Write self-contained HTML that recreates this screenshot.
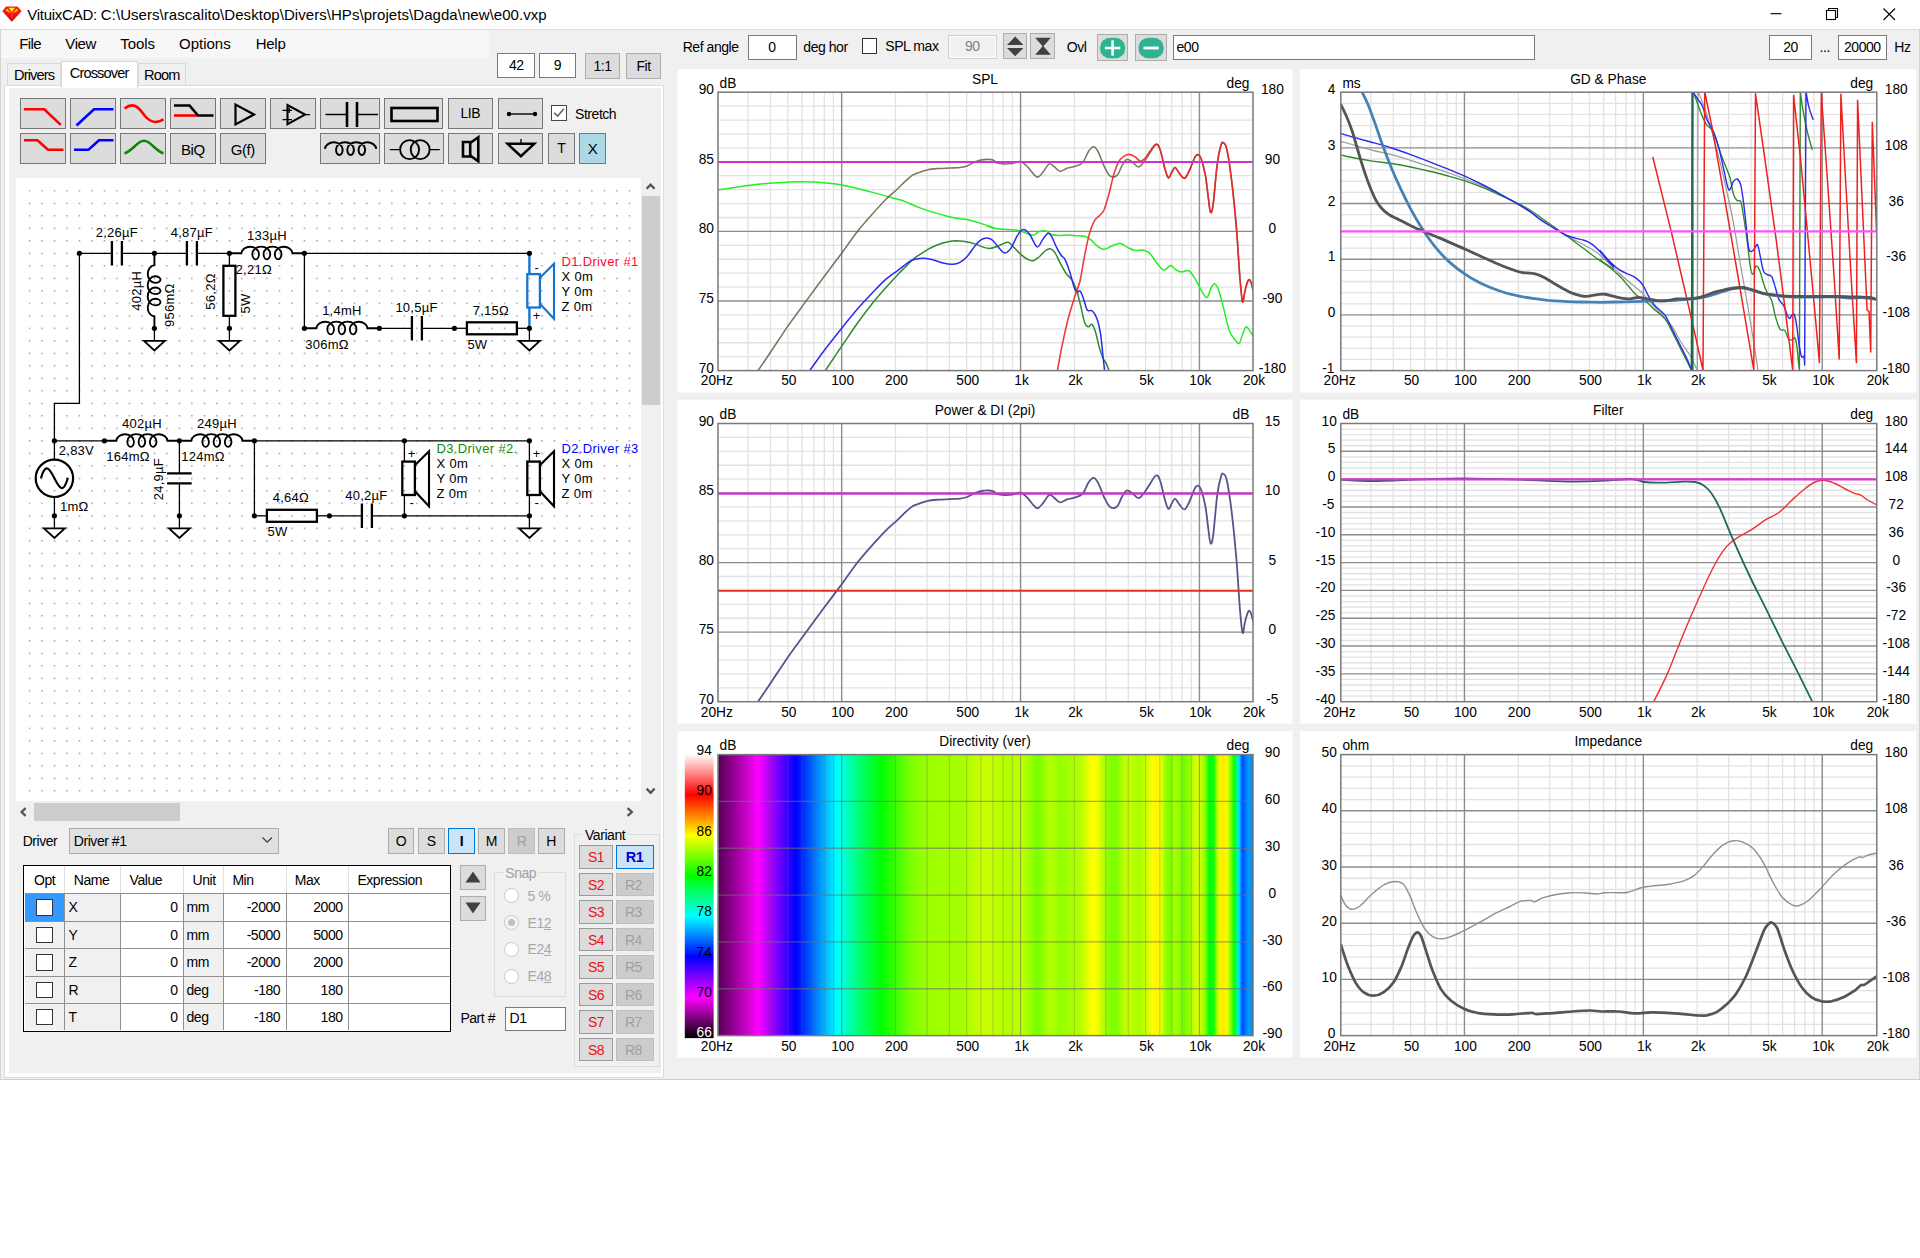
<!DOCTYPE html>
<html lang="en"><head><meta charset="utf-8"><title>VituixCAD</title><style>
html,body{margin:0;padding:0;background:#fff;}
body{width:1920px;height:1258px;position:relative;overflow:hidden;font-family:"Liberation Sans",Arial,sans-serif;}
.a{position:absolute;box-sizing:border-box;}
.t{white-space:nowrap;letter-spacing:-0.45px;}
.ic{display:block;position:absolute;left:0;top:0;}
u{text-decoration:underline;}
</style></head><body>
<div class="a" style="left:0.0px;top:0.0px;width:1920.0px;height:29.5px;background:#fff;"></div>
<svg class="a" style="left:2px;top:5.6px" width="20" height="16.4" viewBox="0 0 20 16.4"><defs><linearGradient id="gem" x1="0" y1="0" x2="0" y2="1"><stop offset="0" stop-color="#ff1818"/><stop offset="0.55" stop-color="#f01010"/><stop offset="1" stop-color="#c00808"/></linearGradient></defs><path d="M4 0.6H15.6L19.6 5.2L9.8 15.8L0.4 5.2Z" fill="url(#gem)"/><path d="M6.6 1.8H13L9.8 6.2Z" fill="#f4f000"/><path d="M3.4 4.6L5.4 2.6L8.6 7.4ZM16.4 4.6L14.4 2.6L11 7.4Z" fill="#e8c800"/><path d="M9.8 6.4V12" stroke="#ff5030" stroke-width="1"/></svg>
<div class="a t" style="top:6.1px;font-size:15px;line-height:18px;color:#000;left:27.2px;letter-spacing:0px;"><span style="letter-spacing:-0.25px">VituixCAD: </span><span style="letter-spacing:0.05px">C:\Users\rascalito\Desktop\Divers\HPs\projets\Dagda\new\e00.vxp</span></div>
<svg class="a" style="left:1760px;top:0" width="160" height="29" viewBox="0 0 160 29" fill="none" stroke="#000" stroke-width="1.1"><path d="M10.5 13.7H21.5"/><rect x="66.5" y="10.5" width="9" height="9"/><path d="M68.5 10.5V8.5H77.5V17.5H75.5"/><path d="M123.5 8.5L135 20M135 8.5L123.5 20"/></svg>
<div class="a" style="left:0.0px;top:29.3px;width:1920.0px;height:1050.5px;background:#f0f0f0;"></div>
<div class="a" style="left:0.0px;top:29.0px;width:1920.0px;height:1.0px;background:#dcdcdc;"></div>
<div class="a" style="left:0.0px;top:29.3px;width:1.0px;height:1050.5px;background:#d4d4d4;"></div>
<div class="a" style="left:1919.0px;top:29.3px;width:1.0px;height:1050.5px;background:#d4d4d4;"></div>
<div class="a" style="left:0.0px;top:1078.8px;width:1920.0px;height:1.1px;background:#cfcfcf;"></div>
<div class="a" style="left:1.0px;top:30.0px;width:488.0px;height:28.4px;background:#f7f7f7;"></div>
<div class="a t" style="top:34.7px;font-size:15px;line-height:18px;color:#000;left:19.2px;letter-spacing:-0.6px;">File</div>
<div class="a t" style="top:34.7px;font-size:15px;line-height:18px;color:#000;left:65.3px;letter-spacing:-0.4px;">View</div>
<div class="a t" style="top:34.7px;font-size:15px;line-height:18px;color:#000;left:120.3px;letter-spacing:-0.05px;">Tools</div>
<div class="a t" style="top:34.7px;font-size:15px;line-height:18px;color:#000;left:179.0px;letter-spacing:0px;">Options</div>
<div class="a t" style="top:34.7px;font-size:15px;line-height:18px;color:#000;left:255.8px;letter-spacing:-0.3px;">Help</div>
<div class="a" style="left:6.5px;top:63.3px;width:54.5px;height:23.5px;background:#f0f0f0;border:1px solid #d9d9d9;"></div>
<div class="a" style="left:138.0px;top:63.3px;width:47.5px;height:23.5px;background:#f0f0f0;border:1px solid #d9d9d9;"></div>
<div class="a" style="left:4.2px;top:85.3px;width:659.8px;height:992.3px;background:#fff;border:1px solid #dcdcdc;"></div>
<div class="a" style="left:8.9px;top:88.2px;width:652.4px;height:985.2px;background:#f0f0f0;"></div>
<div class="a" style="left:60.5px;top:60.7px;width:77.5px;height:27.8px;background:#fff;border:1px solid #d9d9d9;border-bottom:none;"></div>
<div class="a t" style="top:66.1px;font-size:14.6px;line-height:18px;color:#000;left:14.0px;letter-spacing:-0.85px;">Drivers</div>
<div class="a t" style="top:63.8px;font-size:14.6px;line-height:18px;color:#000;left:69.7px;letter-spacing:-0.85px;">Crossover</div>
<div class="a t" style="top:66.1px;font-size:14.6px;line-height:18px;color:#000;left:144.0px;letter-spacing:-0.85px;">Room</div>
<div class="a" style="left:497.3px;top:53.3px;width:37.6px;height:24.3px;background:#fff;border:1px solid #7a7a7a;"></div>
<div class="a t" style="top:57.4px;font-size:14px;line-height:17px;color:#000;left:416.3px;width:200px;text-align:center;">42</div>
<div class="a" style="left:538.7px;top:53.3px;width:37.4px;height:24.3px;background:#fff;border:1px solid #7a7a7a;"></div>
<div class="a t" style="top:57.4px;font-size:14px;line-height:17px;color:#000;left:457.5px;width:200px;text-align:center;">9</div>
<div class="a" style="left:584.8px;top:53.2px;width:35.2px;height:25.6px;background:#dcdcdc;border:1px solid #adadad;"></div>
<div class="a t" style="top:58.2px;font-size:14px;line-height:17px;color:#000;left:502.5px;width:200px;text-align:center;">1:1</div>
<div class="a" style="left:626.1px;top:53.2px;width:34.9px;height:25.6px;background:#dcdcdc;border:1px solid #adadad;"></div>
<div class="a t" style="top:58.2px;font-size:14px;line-height:17px;color:#000;left:543.5px;width:200px;text-align:center;">Fit</div>
<div class="a" style="left:20.2px;top:97.8px;width:45.6px;height:30.8px;background:#dcdcdc;border:1px solid #777777;"><svg class="ic" width="43.6" height="28.8" viewBox="0 0 43.6 28.8" fill="none" stroke-linecap="butt"><path d="M2.8 10.2H23.2L39.8 25.9" stroke="#ff0000" stroke-width="2.6" stroke-linejoin="miter"/></svg></div>
<div class="a" style="left:70.2px;top:97.8px;width:45.6px;height:30.8px;background:#dcdcdc;border:1px solid #777777;"><svg class="ic" width="43.6" height="28.8" viewBox="0 0 43.6 28.8" fill="none" stroke-linecap="butt"><path d="M5.5 26.5L23 10.2H42.5" stroke="#0000ff" stroke-width="2.6"/></svg></div>
<div class="a" style="left:120.3px;top:97.8px;width:45.4px;height:30.8px;background:#dcdcdc;border:1px solid #777777;"><svg class="ic" width="43.4" height="28.8" viewBox="0 0 43.4 28.8" fill="none" stroke-linecap="butt"><path d="M3.5 9.5C12 3 17 7.5 22 14.5C27 21.5 33 26 42.5 20.5" stroke="#ff0000" stroke-width="2.6"/></svg></div>
<div class="a" style="left:170.3px;top:97.8px;width:45.3px;height:30.8px;background:#dcdcdc;border:1px solid #777777;"><svg class="ic" width="43.3" height="28.8" viewBox="0 0 43.3 28.8" fill="none" stroke-linecap="butt"><path d="M3 16.5H26" stroke="#ff0000" stroke-width="2.6"/><path d="M3 6.5H18.5L27 16.5H42.5" stroke="#000" stroke-width="2.6"/></svg></div>
<div class="a" style="left:220.3px;top:97.8px;width:45.4px;height:30.8px;background:#dcdcdc;border:1px solid #777777;"><svg class="ic" width="43.4" height="28.8" viewBox="0 0 43.4 28.8" fill="none" stroke-linecap="butt"><path d="M14.5 5.5V25.5L33 15.5Z" stroke="#000" stroke-width="2.2"/></svg></div>
<div class="a" style="left:270.3px;top:97.8px;width:45.4px;height:30.8px;background:#dcdcdc;border:1px solid #777777;"><svg class="ic" width="43.4" height="28.8" viewBox="0 0 43.4 28.8" fill="none" stroke-linecap="butt"><path d="M16.5 6V25.2L34 15.6Z" stroke="#000" stroke-width="2.1" stroke-linejoin="miter"/><path d="M11.5 11.3H21M18.2 8.6V14M11.5 20.6H21M34 15.6H39" stroke="#000" stroke-width="1.3"/></svg></div>
<div class="a" style="left:320.3px;top:97.8px;width:59.5px;height:30.8px;background:#dcdcdc;border:1px solid #777777;"><svg class="ic" width="57.5" height="28.8" viewBox="0 0 57.5 28.8" fill="none" stroke-linecap="butt"><path d="M4.5 15.5H26M36 15.5H57" stroke="#000" stroke-width="1.4"/><path d="M26 3V28M36 3V28" stroke="#000" stroke-width="2.6"/></svg></div>
<div class="a" style="left:384.3px;top:97.8px;width:58.9px;height:30.8px;background:#dcdcdc;border:1px solid #777777;"><svg class="ic" width="56.9" height="28.8" viewBox="0 0 56.9 28.8" fill="none" stroke-linecap="butt"><rect x="6.5" y="9" width="46" height="13" stroke="#000" stroke-width="2.6"/></svg></div>
<div class="a" style="left:448.2px;top:97.8px;width:45.1px;height:30.8px;background:#dcdcdc;border:1px solid #777777;"></div>
<div class="a t" style="top:105.0px;font-size:14px;line-height:17px;color:#000;left:370.3px;width:200px;text-align:center;">LIB</div>
<div class="a" style="left:498.2px;top:97.8px;width:45.2px;height:30.8px;background:#dcdcdc;border:1px solid #777777;"><svg class="ic" width="43.2" height="28.8" viewBox="0 0 43.2 28.8" fill="none" stroke-linecap="butt"><path d="M10 15H36" stroke="#000" stroke-width="1.4"/><circle cx="10" cy="15" r="2.2" fill="#000"/><circle cx="36" cy="15" r="2.2" fill="#000"/></svg></div>
<div class="a" style="left:551.3px;top:105.1px;width:16.0px;height:16.0px;background:#fff;border:1px solid #444;"><svg class="ic" width="14" height="14" viewBox="0 0 14 14" fill="none"><path d="M2.2 6.8L5.6 10.2L11.8 2.8" stroke="#555" stroke-width="1.4"/></svg></div>
<div class="a t" style="top:106.2px;font-size:14px;line-height:17px;color:#000;left:575.0px;">Stretch</div>
<div class="a" style="left:20.2px;top:132.8px;width:45.6px;height:30.8px;background:#dcdcdc;border:1px solid #777777;"><svg class="ic" width="43.6" height="28.8" viewBox="0 0 43.6 28.8" fill="none" stroke-linecap="butt"><path transform="translate(0 -1.2)" d="M3 7.5H16.5L27 17H42.5" stroke="#ff0000" stroke-width="2.6"/></svg></div>
<div class="a" style="left:70.2px;top:132.8px;width:45.6px;height:30.8px;background:#dcdcdc;border:1px solid #777777;"><svg class="ic" width="43.6" height="28.8" viewBox="0 0 43.6 28.8" fill="none" stroke-linecap="butt"><path transform="translate(0 -1.2)" d="M3 17H17.5L28 7.5H42.5" stroke="#0000ff" stroke-width="2.6"/></svg></div>
<div class="a" style="left:120.3px;top:132.8px;width:45.4px;height:30.8px;background:#dcdcdc;border:1px solid #777777;"><svg class="ic" width="43.4" height="28.8" viewBox="0 0 43.4 28.8" fill="none" stroke-linecap="butt"><path transform="translate(0 -1.2)" d="M3.5 20.5C12 18 16 8 23 8C30 8 34 18 42.5 20.5" stroke="#0a860a" stroke-width="2.6"/></svg></div>
<div class="a" style="left:170.3px;top:132.8px;width:45.3px;height:30.8px;background:#dcdcdc;border:1px solid #777777;"></div>
<div class="a t" style="top:141.2px;font-size:15px;line-height:18px;color:#000;left:92.8px;width:200px;text-align:center;">BiQ</div>
<div class="a" style="left:220.3px;top:132.8px;width:45.4px;height:30.8px;background:#dcdcdc;border:1px solid #777777;"></div>
<div class="a t" style="top:141.2px;font-size:15px;line-height:18px;color:#000;left:142.8px;width:200px;text-align:center;">G(f)</div>
<div class="a" style="left:320.3px;top:132.8px;width:59.5px;height:30.8px;background:#dcdcdc;border:1px solid #777777;"><svg class="ic" width="57.5" height="28.8" viewBox="0 0 57.5 28.8" fill="none" stroke-linecap="butt"><path transform="translate(-7.9 14.9)" d="M11.8 0A8.9 7.4 0 0 1 29.55 0.7A3.3 5.4 0 0 1 22.95 0.7A8.9 7.4 0 0 1 40.80 0.7A3.3 5.4 0 0 1 34.20 0.7A8.9 7.4 0 0 1 52.05 0.7A3.3 5.4 0 0 1 45.45 0.7A8.9 7.4 0 0 1 63.2 0" stroke="#000" stroke-width="2"/></svg></div>
<div class="a" style="left:384.3px;top:132.8px;width:59.7px;height:30.8px;background:#dcdcdc;border:1px solid #777777;"><svg class="ic" width="57.7" height="28.8" viewBox="0 0 57.7 28.8" fill="none" stroke-linecap="butt"><circle cx="24.6" cy="15.6" r="9.5" stroke="#000" stroke-width="1.9"/><circle cx="35.2" cy="15.6" r="9.5" stroke="#000" stroke-width="1.9"/><path d="M4.8 15.6H15M44.8 15.6H54.8" stroke="#000" stroke-width="1.4"/></svg></div>
<div class="a" style="left:448.2px;top:132.8px;width:45.1px;height:30.8px;background:#dcdcdc;border:1px solid #777777;"><svg class="ic" width="43.1" height="28.8" viewBox="0 0 43.1 28.8" fill="none" stroke-linecap="butt"><path d="M14 8H21.2V22.5H14Z" stroke="#000" stroke-width="2.6"/><path d="M21.2 9L29.3 3.2V27.3L21.2 21.5" stroke="#000" stroke-width="2.6" stroke-linejoin="miter"/></svg></div>
<div class="a" style="left:498.2px;top:132.8px;width:45.2px;height:30.8px;background:#dcdcdc;border:1px solid #777777;"><svg class="ic" width="43.2" height="28.8" viewBox="0 0 43.2 28.8" fill="none" stroke-linecap="butt"><path d="M22 5V10" stroke="#000" stroke-width="1.4"/><path d="M8.6 9.8H35.2L21.9 22.2Z" stroke="#000" stroke-width="2.5" stroke-linejoin="miter"/></svg></div>
<div class="a" style="left:548.0px;top:132.8px;width:26.6px;height:30.8px;background:#dcdcdc;border:1px solid #777777;"></div>
<div class="a t" style="top:140.4px;font-size:14px;line-height:17px;color:#000;left:461.3px;width:200px;text-align:center;">T</div>
<div class="a" style="left:579.4px;top:132.8px;width:26.4px;height:30.8px;background:#add8e6;border:1px solid #777777;"></div>
<div class="a t" style="top:140.2px;font-size:15px;line-height:18px;color:#000;left:492.6px;width:200px;text-align:center;">X</div>
<div class="a" style="left:16.0px;top:178.0px;width:624.5px;height:622.5px;background:#fff;"></div>
<div class="a" style="left:641.0px;top:178.0px;width:19.0px;height:622.5px;background:#f0f0f0;"></div>
<div class="a" style="left:641.5px;top:195.5px;width:18.0px;height:209.0px;background:#cdcdcd;"></div>
<svg class="a" style="left:641px;top:178px" width="19" height="623" viewBox="0 0 19 623" fill="none" stroke="#555" stroke-width="2.3"><path d="M5.6 10.8L9.6 6.6L13.6 10.8"/><path d="M5.6 610.6L9.6 614.8L13.6 610.6"/></svg>
<div class="a" style="left:16.0px;top:802.0px;width:624.5px;height:19.5px;background:#f0f0f0;"></div>
<div class="a" style="left:33.8px;top:802.5px;width:146.0px;height:18.5px;background:#cdcdcd;"></div>
<svg class="a" style="left:16px;top:802px" width="625" height="20" viewBox="0 0 625 20" fill="none" stroke="#555" stroke-width="2.3"><path d="M9.6 6.2L5.6 10L9.6 13.8"/><path d="M611.6 6.2L615.8 10L611.6 13.8"/></svg>
<div class="a t" style="top:833.2px;font-size:14px;line-height:17px;color:#000;left:22.7px;">Driver</div>
<div class="a" style="left:69.0px;top:827.8px;width:209.5px;height:26.0px;background:#e1e1e1;border:1px solid #adadad;"></div>
<div class="a t" style="top:833.2px;font-size:14px;line-height:17px;color:#000;left:73.8px;">Driver #1</div>
<svg class="a" style="left:260px;top:834px" width="14" height="12" viewBox="0 0 14 12" fill="none" stroke="#404040" stroke-width="1.3"><path d="M2.5 3.5L7.2 8.2L12 3.5"/></svg>
<div class="a" style="left:387.8px;top:827.8px;width:26.6px;height:26.0px;background:#dcdcdc;border:1px solid #adadad;"></div>
<div class="a t" style="top:832.8px;font-size:14px;line-height:17px;color:#000;left:301.1px;width:200px;text-align:center;">O</div>
<div class="a" style="left:418.0px;top:827.8px;width:26.6px;height:26.0px;background:#dcdcdc;border:1px solid #adadad;"></div>
<div class="a t" style="top:832.8px;font-size:14px;line-height:17px;color:#000;left:331.3px;width:200px;text-align:center;">S</div>
<div class="a" style="left:448.0px;top:827.8px;width:26.8px;height:26.0px;background:#cce4f7;border:1.5px solid #0078d7;"></div>
<div class="a t" style="top:832.8px;font-size:14px;line-height:17px;color:#000;left:361.4px;width:200px;text-align:center;font-weight:bold;">I</div>
<div class="a" style="left:478.0px;top:827.8px;width:26.8px;height:26.0px;background:#dcdcdc;border:1px solid #adadad;"></div>
<div class="a t" style="top:832.8px;font-size:14px;line-height:17px;color:#000;left:391.4px;width:200px;text-align:center;">M</div>
<div class="a" style="left:508.2px;top:827.8px;width:26.6px;height:26.0px;background:#cccccc;border:1px solid #bfbfbf;"></div>
<div class="a t" style="top:832.8px;font-size:14px;line-height:17px;color:#a0a0a0;left:421.5px;width:200px;text-align:center;">R</div>
<div class="a" style="left:537.8px;top:827.8px;width:26.8px;height:26.0px;background:#dcdcdc;border:1px solid #adadad;"></div>
<div class="a t" style="top:832.8px;font-size:14px;line-height:17px;color:#000;left:451.2px;width:200px;text-align:center;">H</div>
<div class="a" style="left:574.2px;top:833.6px;width:85.5px;height:233.4px;border:1px solid #dcdcdc;"></div>
<div class="a" style="left:582.0px;top:826.0px;width:46.0px;height:16.0px;background:#f0f0f0;"></div>
<div class="a t" style="top:827.4px;font-size:14px;line-height:17px;color:#000;left:585.0px;">Variant</div>
<div class="a" style="left:579.2px;top:845.0px;width:34.2px;height:23.7px;background:#dcdcdc;border:1px solid #9a9a9a;"></div>
<div class="a t" style="top:849.2px;font-size:14px;line-height:17px;color:#f01010;left:496.0px;width:200px;text-align:center;">S1</div>
<div class="a" style="left:616.4px;top:845.0px;width:37.3px;height:23.7px;background:#cce4f7;border:1.5px solid #0078d7;"></div>
<div class="a t" style="top:849.1px;font-size:14.5px;line-height:17px;color:#0000e0;left:534.6px;width:200px;text-align:center;font-weight:bold;">R1</div>
<div class="a" style="left:579.2px;top:872.5px;width:34.2px;height:23.7px;background:#dcdcdc;border:1px solid #9a9a9a;"></div>
<div class="a t" style="top:876.8px;font-size:14px;line-height:17px;color:#f01010;left:496.0px;width:200px;text-align:center;">S2</div>
<div class="a" style="left:616.4px;top:872.5px;width:37.3px;height:23.7px;background:#cccccc;border:1px solid #bfbfbf;"></div>
<div class="a t" style="top:876.8px;font-size:14px;line-height:17px;color:#a0a0a0;left:533.4px;width:200px;text-align:center;">R2</div>
<div class="a" style="left:579.2px;top:900.0px;width:34.2px;height:23.7px;background:#dcdcdc;border:1px solid #9a9a9a;"></div>
<div class="a t" style="top:904.3px;font-size:14px;line-height:17px;color:#f01010;left:496.0px;width:200px;text-align:center;">S3</div>
<div class="a" style="left:616.4px;top:900.0px;width:37.3px;height:23.7px;background:#cccccc;border:1px solid #bfbfbf;"></div>
<div class="a t" style="top:904.3px;font-size:14px;line-height:17px;color:#a0a0a0;left:533.4px;width:200px;text-align:center;">R3</div>
<div class="a" style="left:579.2px;top:927.6px;width:34.2px;height:23.7px;background:#dcdcdc;border:1px solid #9a9a9a;"></div>
<div class="a t" style="top:931.8px;font-size:14px;line-height:17px;color:#f01010;left:496.0px;width:200px;text-align:center;">S4</div>
<div class="a" style="left:616.4px;top:927.6px;width:37.3px;height:23.7px;background:#cccccc;border:1px solid #bfbfbf;"></div>
<div class="a t" style="top:931.8px;font-size:14px;line-height:17px;color:#a0a0a0;left:533.4px;width:200px;text-align:center;">R4</div>
<div class="a" style="left:579.2px;top:955.1px;width:34.2px;height:23.7px;background:#dcdcdc;border:1px solid #9a9a9a;"></div>
<div class="a t" style="top:959.3px;font-size:14px;line-height:17px;color:#f01010;left:496.0px;width:200px;text-align:center;">S5</div>
<div class="a" style="left:616.4px;top:955.1px;width:37.3px;height:23.7px;background:#cccccc;border:1px solid #bfbfbf;"></div>
<div class="a t" style="top:959.3px;font-size:14px;line-height:17px;color:#a0a0a0;left:533.4px;width:200px;text-align:center;">R5</div>
<div class="a" style="left:579.2px;top:982.6px;width:34.2px;height:23.7px;background:#dcdcdc;border:1px solid #9a9a9a;"></div>
<div class="a t" style="top:986.8px;font-size:14px;line-height:17px;color:#f01010;left:496.0px;width:200px;text-align:center;">S6</div>
<div class="a" style="left:616.4px;top:982.6px;width:37.3px;height:23.7px;background:#cccccc;border:1px solid #bfbfbf;"></div>
<div class="a t" style="top:986.8px;font-size:14px;line-height:17px;color:#a0a0a0;left:533.4px;width:200px;text-align:center;">R6</div>
<div class="a" style="left:579.2px;top:1010.1px;width:34.2px;height:23.7px;background:#dcdcdc;border:1px solid #9a9a9a;"></div>
<div class="a t" style="top:1014.4px;font-size:14px;line-height:17px;color:#f01010;left:496.0px;width:200px;text-align:center;">S7</div>
<div class="a" style="left:616.4px;top:1010.1px;width:37.3px;height:23.7px;background:#cccccc;border:1px solid #bfbfbf;"></div>
<div class="a t" style="top:1014.4px;font-size:14px;line-height:17px;color:#a0a0a0;left:533.4px;width:200px;text-align:center;">R7</div>
<div class="a" style="left:579.2px;top:1037.6px;width:34.2px;height:23.7px;background:#dcdcdc;border:1px solid #9a9a9a;"></div>
<div class="a t" style="top:1041.9px;font-size:14px;line-height:17px;color:#f01010;left:496.0px;width:200px;text-align:center;">S8</div>
<div class="a" style="left:616.4px;top:1037.6px;width:37.3px;height:23.7px;background:#cccccc;border:1px solid #bfbfbf;"></div>
<div class="a t" style="top:1041.9px;font-size:14px;line-height:17px;color:#a0a0a0;left:533.4px;width:200px;text-align:center;">R8</div>
<div class="a" style="left:23.0px;top:864.5px;width:428.0px;height:167.3px;background:#fff;border:1.7px solid #000;box-sizing:border-box;"></div>
<div class="a" style="left:24.5px;top:893.5px;width:40.0px;height:27.5px;background:#f0f0f0;"></div>
<div class="a" style="left:64.5px;top:893.5px;width:55.9px;height:27.5px;background:#f0f0f0;"></div>
<div class="a" style="left:183.2px;top:893.5px;width:40.0px;height:27.5px;background:#f0f0f0;"></div>
<div class="a" style="left:24.5px;top:921.0px;width:40.0px;height:27.5px;background:#f0f0f0;"></div>
<div class="a" style="left:64.5px;top:921.0px;width:55.9px;height:27.5px;background:#f0f0f0;"></div>
<div class="a" style="left:183.2px;top:921.0px;width:40.0px;height:27.5px;background:#f0f0f0;"></div>
<div class="a" style="left:24.5px;top:948.5px;width:40.0px;height:27.5px;background:#f0f0f0;"></div>
<div class="a" style="left:64.5px;top:948.5px;width:55.9px;height:27.5px;background:#f0f0f0;"></div>
<div class="a" style="left:183.2px;top:948.5px;width:40.0px;height:27.5px;background:#f0f0f0;"></div>
<div class="a" style="left:24.5px;top:976.0px;width:40.0px;height:27.5px;background:#f0f0f0;"></div>
<div class="a" style="left:64.5px;top:976.0px;width:55.9px;height:27.5px;background:#f0f0f0;"></div>
<div class="a" style="left:183.2px;top:976.0px;width:40.0px;height:27.5px;background:#f0f0f0;"></div>
<div class="a" style="left:24.5px;top:1003.5px;width:40.0px;height:26.7px;background:#f0f0f0;"></div>
<div class="a" style="left:64.5px;top:1003.5px;width:55.9px;height:26.7px;background:#f0f0f0;"></div>
<div class="a" style="left:183.2px;top:1003.5px;width:40.0px;height:26.7px;background:#f0f0f0;"></div>
<div class="a" style="left:24.5px;top:893.5px;width:40.0px;height:27.5px;background:#3399ff;"></div>
<div class="a" style="left:24.5px;top:893.0px;width:425.0px;height:1.0px;background:#909090;"></div>
<div class="a" style="left:24.5px;top:920.5px;width:425.0px;height:1.0px;background:#909090;"></div>
<div class="a" style="left:24.5px;top:948.0px;width:425.0px;height:1.0px;background:#909090;"></div>
<div class="a" style="left:24.5px;top:975.5px;width:425.0px;height:1.0px;background:#909090;"></div>
<div class="a" style="left:24.5px;top:1003.0px;width:425.0px;height:1.0px;background:#909090;"></div>
<div class="a" style="left:63.5px;top:865.8px;width:1.0px;height:27.7px;background:#e0e0e0;"></div>
<div class="a" style="left:63.5px;top:893.5px;width:1.0px;height:136.7px;background:#909090;"></div>
<div class="a" style="left:119.5px;top:865.8px;width:1.0px;height:27.7px;background:#e0e0e0;"></div>
<div class="a" style="left:119.5px;top:893.5px;width:1.0px;height:136.7px;background:#909090;"></div>
<div class="a" style="left:182.5px;top:865.8px;width:1.0px;height:27.7px;background:#e0e0e0;"></div>
<div class="a" style="left:182.5px;top:893.5px;width:1.0px;height:136.7px;background:#909090;"></div>
<div class="a" style="left:222.5px;top:865.8px;width:1.0px;height:27.7px;background:#e0e0e0;"></div>
<div class="a" style="left:222.5px;top:893.5px;width:1.0px;height:136.7px;background:#909090;"></div>
<div class="a" style="left:285.5px;top:865.8px;width:1.0px;height:27.7px;background:#e0e0e0;"></div>
<div class="a" style="left:285.5px;top:893.5px;width:1.0px;height:136.7px;background:#909090;"></div>
<div class="a" style="left:347.5px;top:865.8px;width:1.0px;height:27.7px;background:#e0e0e0;"></div>
<div class="a" style="left:347.5px;top:893.5px;width:1.0px;height:136.7px;background:#909090;"></div>
<div class="a t" style="top:872.4px;font-size:14px;line-height:17px;color:#000;left:34.0px;">Opt</div>
<div class="a t" style="top:872.4px;font-size:14px;line-height:17px;color:#000;left:73.8px;">Name</div>
<div class="a t" style="top:872.4px;font-size:14px;line-height:17px;color:#000;left:129.6px;">Value</div>
<div class="a t" style="top:872.4px;font-size:14px;line-height:17px;color:#000;left:192.5px;">Unit</div>
<div class="a t" style="top:872.4px;font-size:14px;line-height:17px;color:#000;left:232.4px;">Min</div>
<div class="a t" style="top:872.4px;font-size:14px;line-height:17px;color:#000;left:294.8px;">Max</div>
<div class="a t" style="top:872.4px;font-size:14px;line-height:17px;color:#000;left:357.4px;">Expression</div>
<div class="a" style="left:36.2px;top:899.2px;width:16.4px;height:16.4px;background:#fff;border:1.3px solid #333;box-sizing:border-box;"></div>
<div class="a t" style="top:899.1px;font-size:14px;line-height:17px;color:#000;left:68.4px;">X</div>
<div class="a t" style="top:899.1px;font-size:14px;line-height:17px;color:#000;right:1742.4px;text-align:right;">0</div>
<div class="a t" style="top:899.1px;font-size:14px;line-height:17px;color:#000;left:186.5px;">mm</div>
<div class="a t" style="top:899.1px;font-size:14px;line-height:17px;color:#000;right:1639.8px;text-align:right;">-2000</div>
<div class="a t" style="top:899.1px;font-size:14px;line-height:17px;color:#000;right:1577.4px;text-align:right;">2000</div>
<div class="a" style="left:36.2px;top:926.8px;width:16.4px;height:16.4px;background:#fff;border:1.3px solid #333;box-sizing:border-box;"></div>
<div class="a t" style="top:926.6px;font-size:14px;line-height:17px;color:#000;left:68.4px;">Y</div>
<div class="a t" style="top:926.6px;font-size:14px;line-height:17px;color:#000;right:1742.4px;text-align:right;">0</div>
<div class="a t" style="top:926.6px;font-size:14px;line-height:17px;color:#000;left:186.5px;">mm</div>
<div class="a t" style="top:926.6px;font-size:14px;line-height:17px;color:#000;right:1639.8px;text-align:right;">-5000</div>
<div class="a t" style="top:926.6px;font-size:14px;line-height:17px;color:#000;right:1577.4px;text-align:right;">5000</div>
<div class="a" style="left:36.2px;top:954.2px;width:16.4px;height:16.4px;background:#fff;border:1.3px solid #333;box-sizing:border-box;"></div>
<div class="a t" style="top:954.1px;font-size:14px;line-height:17px;color:#000;left:68.4px;">Z</div>
<div class="a t" style="top:954.1px;font-size:14px;line-height:17px;color:#000;right:1742.4px;text-align:right;">0</div>
<div class="a t" style="top:954.1px;font-size:14px;line-height:17px;color:#000;left:186.5px;">mm</div>
<div class="a t" style="top:954.1px;font-size:14px;line-height:17px;color:#000;right:1639.8px;text-align:right;">-2000</div>
<div class="a t" style="top:954.1px;font-size:14px;line-height:17px;color:#000;right:1577.4px;text-align:right;">2000</div>
<div class="a" style="left:36.2px;top:981.8px;width:16.4px;height:16.4px;background:#fff;border:1.3px solid #333;box-sizing:border-box;"></div>
<div class="a t" style="top:981.6px;font-size:14px;line-height:17px;color:#000;left:68.4px;">R</div>
<div class="a t" style="top:981.6px;font-size:14px;line-height:17px;color:#000;right:1742.4px;text-align:right;">0</div>
<div class="a t" style="top:981.6px;font-size:14px;line-height:17px;color:#000;left:186.5px;">deg</div>
<div class="a t" style="top:981.6px;font-size:14px;line-height:17px;color:#000;right:1639.8px;text-align:right;">-180</div>
<div class="a t" style="top:981.6px;font-size:14px;line-height:17px;color:#000;right:1577.4px;text-align:right;">180</div>
<div class="a" style="left:36.2px;top:1008.9px;width:16.4px;height:16.4px;background:#fff;border:1.3px solid #333;box-sizing:border-box;"></div>
<div class="a t" style="top:1009.1px;font-size:14px;line-height:17px;color:#000;left:68.4px;">T</div>
<div class="a t" style="top:1009.1px;font-size:14px;line-height:17px;color:#000;right:1742.4px;text-align:right;">0</div>
<div class="a t" style="top:1009.1px;font-size:14px;line-height:17px;color:#000;left:186.5px;">deg</div>
<div class="a t" style="top:1009.1px;font-size:14px;line-height:17px;color:#000;right:1639.8px;text-align:right;">-180</div>
<div class="a t" style="top:1009.1px;font-size:14px;line-height:17px;color:#000;right:1577.4px;text-align:right;">180</div>
<div class="a" style="left:460.4px;top:865.0px;width:25.6px;height:24.6px;background:#dcdcdc;border:1px solid #adadad;"><svg class="ic" width="24" height="22" viewBox="0 0 24 22"><path d="M4.5 16.5L12 5.5L19.5 16.5Z" fill="#404040"/></svg></div>
<div class="a" style="left:460.4px;top:896.4px;width:25.6px;height:24.6px;background:#dcdcdc;border:1px solid #adadad;"><svg class="ic" width="24" height="22" viewBox="0 0 24 22"><path d="M4.5 5.5L12 16.5L19.5 5.5Z" fill="#404040"/></svg></div>
<div class="a" style="left:494.2px;top:871.6px;width:71.5px;height:125.3px;border:1px solid #dcdcdc;"></div>
<div class="a" style="left:502.5px;top:864.0px;width:36.0px;height:16.0px;background:#f0f0f0;"></div>
<div class="a t" style="top:864.8px;font-size:14px;line-height:17px;color:#a0a0a0;left:505.3px;">Snap</div>
<div class="a" style="left:504.3px;top:888.3px;width:15.0px;height:15.0px;background:#fff;border:1px solid #c8c8c8;border-radius:50%;box-sizing:border-box;"></div>
<div class="a t" style="top:887.6px;font-size:14px;line-height:17px;color:#a8a8a8;left:527.6px;">5 %</div>
<div class="a" style="left:504.3px;top:915.2px;width:15.0px;height:15.0px;background:#f4f4f4;border:1px solid #c8c8c8;border-radius:50%;box-sizing:border-box;"></div>
<div class="a" style="left:508.3px;top:919.2px;width:7.0px;height:7.0px;background:#c0c0c0;border-radius:50%;"></div>
<div class="a t" style="top:914.5px;font-size:14px;line-height:17px;color:#a8a8a8;left:527.6px;">E1<u>2</u></div>
<div class="a" style="left:504.3px;top:942.1px;width:15.0px;height:15.0px;background:#fff;border:1px solid #c8c8c8;border-radius:50%;box-sizing:border-box;"></div>
<div class="a t" style="top:941.4px;font-size:14px;line-height:17px;color:#a8a8a8;left:527.6px;">E2<u>4</u></div>
<div class="a" style="left:504.3px;top:969.0px;width:15.0px;height:15.0px;background:#fff;border:1px solid #c8c8c8;border-radius:50%;box-sizing:border-box;"></div>
<div class="a t" style="top:968.3px;font-size:14px;line-height:17px;color:#a8a8a8;left:527.6px;">E4<u>8</u></div>
<div class="a t" style="top:1010.4px;font-size:14px;line-height:17px;color:#000;left:460.4px;">Part #</div>
<div class="a" style="left:505.4px;top:1006.7px;width:60.3px;height:24.2px;background:#fff;border:1px solid #7a7a7a;"></div>
<div class="a t" style="top:1010.4px;font-size:14px;line-height:17px;color:#000;left:509.5px;">D1</div>
<div class="a t" style="top:39.0px;font-size:14px;line-height:17px;color:#000;left:682.7px;">Ref angle</div>
<div class="a" style="left:747.7px;top:35.0px;width:49.3px;height:25.0px;background:#fff;border:1px solid #7a7a7a;"></div>
<div class="a t" style="top:39.0px;font-size:14px;line-height:17px;color:#000;left:672.0px;width:200px;text-align:center;">0</div>
<div class="a t" style="top:39.0px;font-size:14px;line-height:17px;color:#000;left:803.3px;">deg hor</div>
<div class="a" style="left:861.8px;top:38.3px;width:15.6px;height:15.6px;background:#fff;border:1.2px solid #333;box-sizing:border-box;"></div>
<div class="a t" style="top:38.2px;font-size:14px;line-height:17px;color:#000;left:885.3px;">SPL max</div>
<div class="a" style="left:948.0px;top:35.0px;width:48.7px;height:24.4px;background:#f0f0f0;border:1px solid #cfcfcf;box-shadow:inset 0 0 0 1.6px #fafafa;"></div>
<div class="a t" style="top:38.4px;font-size:14px;line-height:17px;color:#808080;left:872.3px;width:200px;text-align:center;">90</div>
<div class="a" style="left:1002.8px;top:32.8px;width:24.4px;height:26.4px;background:#dcdcdc;border:1px solid #adadad;"><svg class="ic" width="22.4" height="24.4" viewBox="1003.8 33.8 22.4 24.4"><path d="M1006.8 44.8L1015 36.3L1023.2 44.8Z" fill="#404040"/><path d="M1006.8 47.8L1015 56L1023.2 47.8Z" fill="#404040"/></svg></div>
<div class="a" style="left:1030.2px;top:32.8px;width:24.6px;height:26.4px;background:#dcdcdc;border:1px solid #adadad;"><svg class="ic" width="22.6" height="24.4" viewBox="1031.2 33.8 22.6 24.4"><path d="M1035.4 37.6H1051L1043.2 46.6Z" fill="#404040"/><path d="M1035.4 54.6H1051L1043.2 45.6Z" fill="#404040"/></svg></div>
<div class="a t" style="top:39.0px;font-size:14px;line-height:17px;color:#000;left:1066.7px;">Ovl</div>
<div class="a" style="left:1096.7px;top:34.0px;width:31.7px;height:26.6px;background:#dcdcdc;border:1px solid #adadad;"><svg class="ic" width="29.7" height="24.6" viewBox="1097.7 35 29.7 24.6"><rect x="1099.8" y="37.8" width="25" height="20.4" rx="10" ry="9.2" fill="#2db392"/><path d="M1104.6 48H1120M1112.3 40.2V55.8" stroke="#fff" stroke-width="2.5"/></svg></div>
<div class="a" style="left:1135.0px;top:34.0px;width:32.4px;height:26.6px;background:#dcdcdc;border:1px solid #adadad;"><svg class="ic" width="30.4" height="24.6" viewBox="1136 35 30.4 24.6"><rect x="1138.6" y="37.8" width="25" height="20.4" rx="10" ry="9.2" fill="#2db392"/><path d="M1143.4 48H1158.8" stroke="#fff" stroke-width="2.8"/></svg></div>
<div class="a" style="left:1172.7px;top:35.0px;width:362.3px;height:25.0px;background:#fff;border:1px solid #7a7a7a;"></div>
<div class="a t" style="top:39.0px;font-size:14px;line-height:17px;color:#000;left:1176.5px;">e00</div>
<div class="a" style="left:1769.0px;top:35.0px;width:43.0px;height:25.0px;background:#fff;border:1px solid #7a7a7a;"></div>
<div class="a t" style="top:39.0px;font-size:14px;line-height:17px;color:#000;left:1690.5px;width:200px;text-align:center;">20</div>
<div class="a t" style="top:39.0px;font-size:14px;line-height:17px;color:#000;left:1819.5px;">...</div>
<div class="a" style="left:1837.7px;top:35.0px;width:49.6px;height:25.0px;background:#fff;border:1px solid #7a7a7a;"></div>
<div class="a t" style="top:39.0px;font-size:14px;line-height:17px;color:#000;left:1762.3px;width:200px;text-align:center;">20000</div>
<div class="a t" style="top:39.0px;font-size:14px;line-height:17px;color:#000;left:1894.3px;">Hz</div>
<svg class="a" style="left:16px;top:178px" width="624.5" height="622.5" viewBox="16 178 624.5 622.5"><pattern id="gd" x="28.75" y="190.15" width="12.5" height="12.5" patternUnits="userSpaceOnUse"><rect x="0" y="0" width="1.3" height="1.3" fill="#808080"/></pattern>
<rect x="28.75" y="190.15" width="602.00" height="602.00" fill="url(#gd)"/>
<path d="M54.4 440.8 L54.4 403.3 L79.4 403.3 L79.4 253.3" stroke="#000" stroke-width="1.3" fill="none"/>
<path d="M79.4 253.3 L111.9 253.3" stroke="#000" stroke-width="1.3" fill="none"/><path d="M121.9 253.3 L154.4 253.3" stroke="#000" stroke-width="1.3" fill="none"/><path d="M111.9 241.0V265.6M121.9 241.0V265.6" stroke="#000" stroke-width="2.3"/>
<path d="M154.4 253.3 L186.9 253.3" stroke="#000" stroke-width="1.3" fill="none"/><path d="M196.9 253.3 L229.4 253.3" stroke="#000" stroke-width="1.3" fill="none"/><path d="M186.9 241.0V265.6M196.9 241.0V265.6" stroke="#000" stroke-width="2.3"/>
<path transform="translate(229.4 253.3)" d="M0 0H11.8A8.9 7.4 0 0 1 29.55 0.7A3.3 5.4 0 0 1 22.95 0.7A8.9 7.4 0 0 1 40.80 0.7A3.3 5.4 0 0 1 34.20 0.7A8.9 7.4 0 0 1 52.05 0.7A3.3 5.4 0 0 1 45.45 0.7A8.9 7.4 0 0 1 63.2 0H75" stroke="#000" stroke-width="1.9" fill="none"/>
<path d="M304.4 253.3 L529.4 253.3" stroke="#000" stroke-width="1.3" fill="none"/>
<path transform="translate(154.4 328.3) rotate(-90)" d="M0 0H11.8A8.9 7.4 0 0 1 29.55 0.7A3.3 5.4 0 0 1 22.95 0.7A8.9 7.4 0 0 1 40.80 0.7A3.3 5.4 0 0 1 34.20 0.7A8.9 7.4 0 0 1 52.05 0.7A3.3 5.4 0 0 1 45.45 0.7A8.9 7.4 0 0 1 63.2 0H75" stroke="#000" stroke-width="1.9" fill="none"/>
<path d="M154.4 328.3 L154.4 340.8" stroke="#000" stroke-width="1.3" fill="none"/><path d="M144.0 340.8H164.8L154.4 350.5Z" stroke="#000" stroke-width="1.8" fill="none" stroke-linejoin="miter"/>
<path d="M229.4 253.3 L229.4 265.8" stroke="#000" stroke-width="1.3" fill="none"/><path d="M229.4 315.8 L229.4 328.3" stroke="#000" stroke-width="1.3" fill="none"/><rect x="223.4" y="265.8" width="12" height="50" stroke="#000" stroke-width="2.3" fill="none"/>
<path d="M229.4 328.3 L229.4 340.8" stroke="#000" stroke-width="1.3" fill="none"/><path d="M219.0 340.8H239.8L229.4 350.5Z" stroke="#000" stroke-width="1.8" fill="none" stroke-linejoin="miter"/>
<path d="M304.4 253.3 L304.4 328.3" stroke="#000" stroke-width="1.3" fill="none"/>
<path transform="translate(304.4 328.3)" d="M0 0H11.8A8.9 7.4 0 0 1 29.55 0.7A3.3 5.4 0 0 1 22.95 0.7A8.9 7.4 0 0 1 40.80 0.7A3.3 5.4 0 0 1 34.20 0.7A8.9 7.4 0 0 1 52.05 0.7A3.3 5.4 0 0 1 45.45 0.7A8.9 7.4 0 0 1 63.2 0H75" stroke="#000" stroke-width="1.9" fill="none"/>
<path d="M379.4 328.3 L411.9 328.3" stroke="#000" stroke-width="1.3" fill="none"/><path d="M421.9 328.3 L454.4 328.3" stroke="#000" stroke-width="1.3" fill="none"/><path d="M411.9 316.0V340.6M421.9 316.0V340.6" stroke="#000" stroke-width="2.3"/>
<path d="M454.4 328.3 L466.9 328.3" stroke="#000" stroke-width="1.3" fill="none"/><path d="M516.9 328.3 L529.4 328.3" stroke="#000" stroke-width="1.3" fill="none"/><rect x="466.9" y="322.3" width="50" height="12" stroke="#000" stroke-width="2.3" fill="none"/>
<path d="M529.4 328.3 L529.4 340.8" stroke="#000" stroke-width="1.3" fill="none"/><path d="M519.0 340.8H539.8L529.4 350.5Z" stroke="#000" stroke-width="1.8" fill="none" stroke-linejoin="miter"/>
<path d="M529.4 253.3 L529.4 274.1" stroke="#1874cd" stroke-width="2.4" fill="none"/><path d="M529.4 307.5 L529.4 328.3" stroke="#1874cd" stroke-width="2.4" fill="none"/><rect x="527.3" y="274.1" width="12.6" height="33.4" stroke="#1874cd" stroke-width="2.3" fill="none"/><path d="M539.9 277.8L554.0 263.8V318.8L539.9 303.8" stroke="#1874cd" stroke-width="2.1" fill="none" stroke-linejoin="miter"/>
<circle cx="79.4" cy="253.3" r="2.6" fill="#000"/>
<circle cx="154.4" cy="253.3" r="2.6" fill="#000"/>
<circle cx="229.4" cy="253.3" r="2.6" fill="#000"/>
<circle cx="304.4" cy="253.3" r="2.6" fill="#000"/>
<circle cx="529.4" cy="253.3" r="2.6" fill="#000"/>
<circle cx="154.4" cy="328.3" r="2.6" fill="#000"/>
<circle cx="229.4" cy="328.3" r="2.6" fill="#000"/>
<circle cx="304.4" cy="328.3" r="2.6" fill="#000"/>
<circle cx="379.4" cy="328.3" r="2.6" fill="#000"/>
<circle cx="454.4" cy="328.3" r="2.6" fill="#000"/>
<circle cx="529.4" cy="328.3" r="2.6" fill="#000"/>
<path d="M54.4 440.8 L104.4 440.8" stroke="#000" stroke-width="1.3" fill="none"/>
<path transform="translate(104.4 440.8)" d="M0 0H11.8A8.9 7.4 0 0 1 29.55 0.7A3.3 5.4 0 0 1 22.95 0.7A8.9 7.4 0 0 1 40.80 0.7A3.3 5.4 0 0 1 34.20 0.7A8.9 7.4 0 0 1 52.05 0.7A3.3 5.4 0 0 1 45.45 0.7A8.9 7.4 0 0 1 63.2 0H75" stroke="#000" stroke-width="1.9" fill="none"/>
<path transform="translate(179.4 440.8)" d="M0 0H11.8A8.9 7.4 0 0 1 29.55 0.7A3.3 5.4 0 0 1 22.95 0.7A8.9 7.4 0 0 1 40.80 0.7A3.3 5.4 0 0 1 34.20 0.7A8.9 7.4 0 0 1 52.05 0.7A3.3 5.4 0 0 1 45.45 0.7A8.9 7.4 0 0 1 63.2 0H75" stroke="#000" stroke-width="1.9" fill="none"/>
<path d="M254.4 440.8 L529.4 440.8" stroke="#000" stroke-width="1.3" fill="none"/>
<path d="M179.4 440.8 L179.4 473.3" stroke="#000" stroke-width="1.3" fill="none"/><path d="M179.4 483.3 L179.4 515.8" stroke="#000" stroke-width="1.3" fill="none"/><path d="M167.1 473.3H191.7M167.1 483.3H191.7" stroke="#000" stroke-width="2.3"/>
<path d="M179.4 515.8 L179.4 528.3" stroke="#000" stroke-width="1.3" fill="none"/><path d="M169.0 528.3H189.8L179.4 538.0Z" stroke="#000" stroke-width="1.8" fill="none" stroke-linejoin="miter"/>
<path d="M254.4 440.8 L254.4 515.8" stroke="#000" stroke-width="1.3" fill="none"/>
<path d="M254.4 515.8 L266.9 515.8" stroke="#000" stroke-width="1.3" fill="none"/><path d="M316.9 515.8 L329.4 515.8" stroke="#000" stroke-width="1.3" fill="none"/><rect x="266.9" y="509.8" width="50" height="12" stroke="#000" stroke-width="2.3" fill="none"/>
<path d="M329.4 515.8 L361.9 515.8" stroke="#000" stroke-width="1.3" fill="none"/><path d="M371.9 515.8 L404.4 515.8" stroke="#000" stroke-width="1.3" fill="none"/><path d="M361.9 503.5V528.1M371.9 503.5V528.1" stroke="#000" stroke-width="2.3"/>
<path d="M404.4 515.8 L529.4 515.8" stroke="#000" stroke-width="1.3" fill="none"/>
<path d="M404.4 440.8 L404.4 461.6" stroke="#000" stroke-width="1.3" fill="none"/><path d="M404.4 495.0 L404.4 515.8" stroke="#000" stroke-width="1.3" fill="none"/><rect x="402.3" y="461.6" width="12.6" height="33.4" stroke="#000" stroke-width="2.3" fill="none"/><path d="M414.9 465.3L429.0 451.3V506.3L414.9 491.3" stroke="#000" stroke-width="2.1" fill="none" stroke-linejoin="miter"/>
<path d="M529.4 440.8 L529.4 461.6" stroke="#000" stroke-width="1.3" fill="none"/><path d="M529.4 495.0 L529.4 515.8" stroke="#000" stroke-width="1.3" fill="none"/><rect x="527.3" y="461.6" width="12.6" height="33.4" stroke="#000" stroke-width="2.3" fill="none"/><path d="M539.9 465.3L554.0 451.3V506.3L539.9 491.3" stroke="#000" stroke-width="2.1" fill="none" stroke-linejoin="miter"/>
<path d="M529.4 515.8 L529.4 528.3" stroke="#000" stroke-width="1.3" fill="none"/><path d="M519.0 528.3H539.8L529.4 538.0Z" stroke="#000" stroke-width="1.8" fill="none" stroke-linejoin="miter"/>
<path d="M54.4 440.8 L54.4 459.3" stroke="#000" stroke-width="1.3" fill="none"/>
<path d="M54.4 497.3 L54.4 515.8" stroke="#000" stroke-width="1.3" fill="none"/>
<circle cx="54.4" cy="478.3" r="18.7" stroke="#000" stroke-width="2.2" fill="none"/>
<path d="M40.9 478.3C45.4 462.3 49.4 468.3 54.4 478.3S63.4 494.3 67.9 477.8" stroke="#000" stroke-width="2.1" fill="none"/>
<path d="M54.4 515.8 L54.4 528.3" stroke="#000" stroke-width="1.3" fill="none"/><path d="M44.0 528.3H64.8L54.4 538.0Z" stroke="#000" stroke-width="1.8" fill="none" stroke-linejoin="miter"/>
<circle cx="54.4" cy="440.8" r="2.6" fill="#000"/>
<circle cx="104.4" cy="440.8" r="2.6" fill="#000"/>
<circle cx="179.4" cy="440.8" r="2.6" fill="#000"/>
<circle cx="254.4" cy="440.8" r="2.6" fill="#000"/>
<circle cx="404.4" cy="440.8" r="2.6" fill="#000"/>
<circle cx="529.4" cy="440.8" r="2.6" fill="#000"/>
<circle cx="54.4" cy="515.8" r="2.6" fill="#000"/>
<circle cx="179.4" cy="515.8" r="2.6" fill="#000"/>
<circle cx="254.4" cy="515.8" r="2.6" fill="#000"/>
<circle cx="329.4" cy="515.8" r="2.6" fill="#000"/>
<circle cx="404.4" cy="515.8" r="2.6" fill="#000"/>
<circle cx="529.4" cy="515.8" r="2.6" fill="#000"/>
<g font-family='"Liberation Sans", Arial, sans-serif' font-size="13"><text x="116.9" y="237.3" text-anchor="middle" fill="#000" letter-spacing="0.25">2,26µF</text><text x="191.9" y="237.3" text-anchor="middle" fill="#000" letter-spacing="0.25">4,87µF</text><text x="266.9" y="240.0" text-anchor="middle" fill="#000" letter-spacing="0.25">133µH</text><text x="235.6" y="273.8" fill="#000" letter-spacing="0.25">2,21Ω</text><text transform="translate(140.6 290.8) rotate(-90)" text-anchor="middle" fill="#000" letter-spacing="0.25">402µH</text><text transform="translate(174.3 327.0) rotate(-90)" fill="#000" letter-spacing="0.25">956mΩ</text><text transform="translate(215.0 291.5) rotate(-90)" text-anchor="middle" fill="#000" letter-spacing="0.25">56,2Ω</text><text transform="translate(249.5 313.6) rotate(-90)" fill="#000" letter-spacing="0.25">5W</text><text x="341.9" y="315.0" text-anchor="middle" fill="#000" letter-spacing="0.25">1,4mH</text><text x="305.2" y="348.5" fill="#000" letter-spacing="0.25">306mΩ</text><text x="416.5" y="312.3" text-anchor="middle" fill="#000" letter-spacing="0.25">10,5µF</text><text x="490.9" y="314.6" text-anchor="middle" fill="#000" letter-spacing="0.25">7,15Ω</text><text x="467.4" y="348.5" fill="#000" letter-spacing="0.25">5W</text><text x="141.9" y="427.5" text-anchor="middle" fill="#000" letter-spacing="0.25">402µH</text><text x="216.9" y="427.5" text-anchor="middle" fill="#000" letter-spacing="0.25">249µH</text><text x="106.3" y="461.1" fill="#000" letter-spacing="0.25">164mΩ</text><text x="181.3" y="460.8" fill="#000" letter-spacing="0.25">124mΩ</text><text transform="translate(162.8 479.2) rotate(-90)" text-anchor="middle" fill="#000" letter-spacing="0.25">24,9µF</text><text x="58.8" y="454.9" fill="#000" letter-spacing="0.25">2,83V</text><text x="60.0" y="510.9" fill="#000" letter-spacing="0.25">1mΩ</text><text x="290.9" y="502.1" text-anchor="middle" fill="#000" letter-spacing="0.25">4,64Ω</text><text x="267.6" y="536.0" fill="#000" letter-spacing="0.25">5W</text><text x="366.4" y="499.8" text-anchor="middle" fill="#000" letter-spacing="0.25">40,2µF</text><text x="561.4" y="265.7" fill="#ff0a32" letter-spacing="0.35">D1.Driver #1</text><text x="561.4" y="280.9" fill="#000" letter-spacing="0.4">X 0m</text><text x="561.4" y="295.9" fill="#000" letter-spacing="0.4">Y 0m</text><text x="561.4" y="310.9" fill="#000" letter-spacing="0.4">Z 0m</text><text x="536.7" y="271.5" text-anchor="middle" fill="#000" letter-spacing="0.25">-</text><text x="536.7" y="319.9" text-anchor="middle" fill="#000" letter-spacing="0.25">+</text><text x="436.4" y="453.2" fill="#108a10" letter-spacing="0.35">D3.Driver #2.</text><text x="436.4" y="468.4" fill="#000" letter-spacing="0.4">X 0m</text><text x="436.4" y="483.4" fill="#000" letter-spacing="0.4">Y 0m</text><text x="436.4" y="498.4" fill="#000" letter-spacing="0.4">Z 0m</text><text x="411.7" y="457.6" text-anchor="middle" fill="#000" letter-spacing="0.25">+</text><text x="411.7" y="507.0" text-anchor="middle" fill="#000" letter-spacing="0.25">-</text><text x="561.4" y="453.2" fill="#0000ff" letter-spacing="0.35">D2.Driver #3</text><text x="561.4" y="468.4" fill="#000" letter-spacing="0.4">X 0m</text><text x="561.4" y="483.4" fill="#000" letter-spacing="0.4">Y 0m</text><text x="561.4" y="498.4" fill="#000" letter-spacing="0.4">Z 0m</text><text x="536.7" y="457.6" text-anchor="middle" fill="#000" letter-spacing="0.25">+</text><text x="536.7" y="507.0" text-anchor="middle" fill="#000" letter-spacing="0.25">-</text></g></svg>
<svg width="1250" height="1000" viewBox="670 60 1250 1000" style="position:absolute;left:670px;top:60px;overflow:visible"><rect x="677.5" y="69.2" width="615.0" height="323.4" fill="#fff"/>

<path d="M718.0 106.12H1253.0" stroke="#e2e2e2" stroke-width="1.3"/>
<path d="M718.0 120.04H1253.0" stroke="#e2e2e2" stroke-width="1.3"/>
<path d="M718.0 133.96H1253.0" stroke="#e2e2e2" stroke-width="1.3"/>
<path d="M718.0 147.88H1253.0" stroke="#e2e2e2" stroke-width="1.3"/>
<path d="M718.0 175.72H1253.0" stroke="#e2e2e2" stroke-width="1.3"/>
<path d="M718.0 189.64H1253.0" stroke="#e2e2e2" stroke-width="1.3"/>
<path d="M718.0 203.56H1253.0" stroke="#e2e2e2" stroke-width="1.3"/>
<path d="M718.0 217.48H1253.0" stroke="#e2e2e2" stroke-width="1.3"/>
<path d="M718.0 245.32H1253.0" stroke="#e2e2e2" stroke-width="1.3"/>
<path d="M718.0 259.24H1253.0" stroke="#e2e2e2" stroke-width="1.3"/>
<path d="M718.0 273.16H1253.0" stroke="#e2e2e2" stroke-width="1.3"/>
<path d="M718.0 287.08H1253.0" stroke="#e2e2e2" stroke-width="1.3"/>
<path d="M718.0 314.92H1253.0" stroke="#e2e2e2" stroke-width="1.3"/>
<path d="M718.0 328.84H1253.0" stroke="#e2e2e2" stroke-width="1.3"/>
<path d="M718.0 342.76H1253.0" stroke="#e2e2e2" stroke-width="1.3"/>
<path d="M718.0 356.68H1253.0" stroke="#e2e2e2" stroke-width="1.3"/>
<path d="M748.10 92.2V370.6" stroke="#e2e2e2" stroke-width="1.3"/>
<path d="M770.45 92.2V370.6" stroke="#e2e2e2" stroke-width="1.3"/>
<path d="M787.79 92.2V370.6" stroke="#e2e2e2" stroke-width="1.3"/>
<path d="M801.96 92.2V370.6" stroke="#e2e2e2" stroke-width="1.3"/>
<path d="M813.93 92.2V370.6" stroke="#e2e2e2" stroke-width="1.3"/>
<path d="M824.31 92.2V370.6" stroke="#e2e2e2" stroke-width="1.3"/>
<path d="M833.46 92.2V370.6" stroke="#e2e2e2" stroke-width="1.3"/>
<path d="M895.50 92.2V370.6" stroke="#e2e2e2" stroke-width="1.3"/>
<path d="M927.00 92.2V370.6" stroke="#e2e2e2" stroke-width="1.3"/>
<path d="M949.35 92.2V370.6" stroke="#e2e2e2" stroke-width="1.3"/>
<path d="M966.69 92.2V370.6" stroke="#e2e2e2" stroke-width="1.3"/>
<path d="M980.86 92.2V370.6" stroke="#e2e2e2" stroke-width="1.3"/>
<path d="M992.83 92.2V370.6" stroke="#e2e2e2" stroke-width="1.3"/>
<path d="M1003.21 92.2V370.6" stroke="#e2e2e2" stroke-width="1.3"/>
<path d="M1012.36 92.2V370.6" stroke="#e2e2e2" stroke-width="1.3"/>
<path d="M1074.40 92.2V370.6" stroke="#e2e2e2" stroke-width="1.3"/>
<path d="M1105.90 92.2V370.6" stroke="#e2e2e2" stroke-width="1.3"/>
<path d="M1128.25 92.2V370.6" stroke="#e2e2e2" stroke-width="1.3"/>
<path d="M1145.59 92.2V370.6" stroke="#e2e2e2" stroke-width="1.3"/>
<path d="M1159.76 92.2V370.6" stroke="#e2e2e2" stroke-width="1.3"/>
<path d="M1171.73 92.2V370.6" stroke="#e2e2e2" stroke-width="1.3"/>
<path d="M1182.11 92.2V370.6" stroke="#e2e2e2" stroke-width="1.3"/>
<path d="M1191.26 92.2V370.6" stroke="#e2e2e2" stroke-width="1.3"/>
<path d="M718.0 161.80H1253.0" stroke="#8c8c8c" stroke-width="1.4"/>
<path d="M718.0 231.40H1253.0" stroke="#8c8c8c" stroke-width="1.4"/>
<path d="M718.0 301.00H1253.0" stroke="#8c8c8c" stroke-width="1.4"/>
<path d="M841.65 92.2V370.6" stroke="#8c8c8c" stroke-width="1.4"/>
<path d="M1020.55 92.2V370.6" stroke="#8c8c8c" stroke-width="1.4"/>
<path d="M1199.45 92.2V370.6" stroke="#8c8c8c" stroke-width="1.4"/>
<clipPath id="c11"><rect x="718.0" y="92.2" width="535.0" height="278.4"/></clipPath>
<g clip-path="url(#c11)" fill="none" stroke-linejoin="round" stroke-linecap="round"><path d="M718.6 189.7 C721.5 189.3 730.1 188.1 735.8 187.3 C741.4 186.5 746.5 185.6 752.5 184.9 C758.4 184.2 765.6 183.5 771.5 183.0 C777.5 182.5 783.1 182.3 788.2 182.1 C793.4 181.9 798.2 181.8 802.5 181.8 C806.9 181.8 810.1 181.8 814.5 182.1 C818.8 182.3 824.2 182.8 828.8 183.3 C833.3 183.7 837.1 184.1 841.9 184.9 C846.7 185.8 852.4 187.3 857.4 188.5 C862.4 189.7 866.9 190.8 871.7 192.1 C876.5 193.4 881.6 194.9 886.0 196.1 C890.4 197.3 894.8 198.3 897.9 199.2 C901.1 200.2 901.5 200.2 905.1 201.6 C908.7 203.0 914.6 205.8 919.4 207.6 C924.2 209.4 928.9 210.9 933.7 212.4 C938.5 213.8 943.6 215.3 948.0 216.4 C952.4 217.5 956.8 218.3 959.9 218.8 C963.1 219.3 963.5 218.7 967.1 219.5 C970.7 220.3 976.8 222.2 981.4 223.6 C986.0 225.0 993.6 227.5 994.5 227.9 C995.5 228.3 987.2 225.9 987.2 225.9 C987.1 226.0 991.5 227.8 994.3 228.3 C997.1 228.9 1000.7 229.0 1003.8 229.3 C1007.0 229.5 1010.6 229.5 1013.4 229.8 C1016.2 230.0 1018.2 230.3 1020.5 231.0 C1022.9 231.6 1025.5 233.1 1027.7 233.8 C1029.9 234.5 1031.7 235.4 1033.7 235.0 C1035.6 234.6 1037.6 232.1 1039.6 231.4 C1041.6 230.8 1043.6 230.4 1045.6 231.0 C1047.6 231.5 1049.4 233.8 1051.5 234.5 C1053.7 235.3 1056.1 235.4 1058.7 235.5 C1061.3 235.6 1064.3 235.0 1067.0 235.0 C1069.8 235.0 1072.4 235.5 1075.4 235.7 C1078.4 235.9 1082.3 235.5 1084.9 236.2 C1087.5 236.9 1088.9 238.2 1090.9 239.8 C1092.9 241.4 1094.7 244.2 1096.9 245.7 C1099.0 247.3 1101.4 249.3 1104.0 249.3 C1106.6 249.3 1109.6 246.7 1112.4 245.7 C1115.1 244.7 1118.1 243.0 1120.7 243.4 C1123.3 243.7 1125.5 246.5 1127.9 247.6 C1130.2 248.8 1132.6 250.1 1135.0 250.5 C1137.4 250.9 1139.8 249.6 1142.2 250.0 C1144.5 250.4 1146.9 250.8 1149.3 252.9 C1151.7 255.0 1154.1 259.6 1156.5 262.4 C1158.9 265.3 1161.2 269.5 1163.6 270.1 C1166.0 270.6 1168.8 265.6 1170.8 265.5 C1172.8 265.5 1173.8 268.5 1175.6 269.6 C1177.3 270.7 1179.3 271.8 1181.5 272.0 C1183.7 272.2 1186.5 269.8 1188.7 270.8 C1190.9 271.8 1192.4 274.6 1194.6 277.9 C1196.8 281.3 1199.7 287.8 1201.8 291.1 C1203.8 294.3 1205.4 298.1 1207.0 297.5 C1208.6 296.9 1210.0 289.7 1211.3 287.5 C1212.6 285.2 1213.7 283.5 1214.9 283.9 C1216.1 284.3 1217.1 286.1 1218.5 289.9 C1219.9 293.6 1221.5 299.8 1223.2 306.6 C1225.0 313.3 1227.2 324.8 1229.2 330.4 C1231.2 336.0 1233.5 337.8 1235.2 339.9 C1236.8 342.1 1238.0 344.3 1239.2 343.5 C1240.4 342.7 1241.2 338.0 1242.3 335.2 C1243.4 332.4 1244.7 327.6 1245.9 326.8 C1247.1 326.0 1248.3 328.8 1249.5 330.4 C1250.7 332.0 1252.5 335.4 1253.1 336.4" stroke="#22ee22" stroke-width="1.5"/><path d="M825.7 370.0 C828.4 366.0 836.6 353.7 841.9 345.9 C847.2 338.1 852.4 330.2 857.4 323.2 C862.4 316.3 866.9 310.1 871.7 304.2 C876.5 298.2 881.6 292.4 886.0 287.5 C890.4 282.5 894.8 277.7 897.9 274.4 C901.1 271.0 902.7 269.6 905.1 267.2 C907.5 264.8 909.9 262.1 912.2 260.0 C914.6 258.0 916.6 256.7 919.4 254.8 C922.2 252.9 925.8 250.5 928.9 248.8 C932.1 247.1 935.3 245.7 938.5 244.5 C941.7 243.4 945.0 242.3 948.0 241.7 C951.0 241.1 953.6 240.8 956.4 240.7 C959.1 240.7 961.7 241.0 964.7 241.4 C967.7 241.9 971.1 242.6 974.2 243.6 C977.4 244.6 981.2 246.6 983.8 247.4 C986.4 248.2 987.8 248.4 989.7 248.4 C991.7 248.3 994.9 247.1 995.7 246.9 C996.5 246.8 993.3 247.8 994.3 247.4 C995.3 247.0 999.2 245.4 1001.5 244.5 C1003.8 243.7 1006.2 241.8 1008.1 242.2 C1010.1 242.6 1011.3 244.9 1013.4 246.9 C1015.5 248.9 1018.2 252.0 1020.5 254.1 C1022.9 256.2 1025.5 258.3 1027.7 259.3 C1029.9 260.4 1031.7 261.0 1033.7 260.5 C1035.6 260.0 1037.6 258.1 1039.6 256.5 C1041.6 254.8 1043.8 251.8 1045.6 250.5 C1047.4 249.2 1048.8 248.4 1050.4 248.8 C1051.9 249.2 1053.5 250.6 1055.1 252.9 C1056.7 255.2 1058.1 259.1 1059.9 262.4 C1061.7 265.8 1063.9 270.3 1065.9 273.2 C1067.8 276.1 1070.0 277.1 1071.8 279.8 C1073.6 282.6 1075.0 285.0 1076.6 289.9 C1078.2 294.7 1080.0 303.4 1081.4 308.9 C1082.7 314.5 1083.7 320.3 1084.9 323.2 C1086.1 326.2 1087.3 326.6 1088.5 326.8 C1089.7 327.0 1090.9 323.4 1092.1 324.4 C1093.3 325.4 1094.5 329.0 1095.7 332.8 C1096.9 336.6 1098.0 342.9 1099.2 347.1 C1100.4 351.3 1101.6 355.0 1102.8 357.8 C1104.0 360.6 1105.4 361.8 1106.4 363.8 C1107.4 365.8 1108.4 369.0 1108.8 370.0" stroke="#2e8b2e" stroke-width="1.5"/><path d="M810.2 370.0 C812.5 366.8 818.7 357.7 824.0 350.7 C829.3 343.7 836.3 335.0 841.9 328.0 C847.5 321.1 852.4 314.7 857.4 308.9 C862.4 303.2 866.9 298.4 871.7 293.4 C876.5 288.5 881.6 283.0 886.0 279.1 C890.4 275.3 894.8 272.7 897.9 270.3 C901.1 267.9 902.7 266.5 905.1 264.8 C907.5 263.1 909.9 261.1 912.2 260.0 C914.6 259.0 917.0 258.7 919.4 258.4 C921.8 258.1 924.2 258.1 926.6 258.4 C928.9 258.7 930.9 259.3 933.7 260.0 C936.5 260.8 940.1 262.4 943.2 263.1 C946.4 263.9 950.0 264.5 952.8 264.3 C955.6 264.2 957.6 263.7 959.9 262.4 C962.3 261.1 964.7 259.1 967.1 256.5 C969.5 253.9 972.1 249.6 974.2 246.9 C976.4 244.2 978.2 241.8 980.2 240.3 C982.2 238.7 984.2 238.0 986.2 237.9 C988.2 237.8 990.0 238.1 992.1 239.8 C994.3 241.5 996.9 245.9 999.1 248.1 C1001.2 250.3 1003.1 252.9 1005.0 252.9 C1007.0 252.9 1009.0 250.9 1011.0 248.1 C1013.0 245.3 1015.2 239.2 1017.0 236.2 C1018.8 233.2 1020.3 231.3 1021.7 230.2 C1023.1 229.2 1023.9 229.0 1025.3 229.8 C1026.7 230.6 1028.1 232.1 1030.1 235.0 C1032.1 237.9 1035.0 246.3 1037.2 246.9 C1039.4 247.5 1041.4 240.9 1043.2 238.6 C1045.0 236.3 1046.6 233.7 1048.0 233.3 C1049.4 232.9 1050.2 233.9 1051.5 236.2 C1052.9 238.5 1054.7 243.8 1056.3 246.9 C1057.9 250.1 1059.7 253.3 1061.1 255.3 C1062.5 257.3 1063.3 256.3 1064.7 258.9 C1066.0 261.4 1067.8 266.0 1069.4 270.8 C1071.0 275.6 1073.0 283.9 1074.2 287.5 C1075.4 291.1 1075.6 291.6 1076.6 292.2 C1077.6 292.8 1079.0 289.9 1080.2 291.1 C1081.4 292.2 1082.5 296.2 1083.7 299.4 C1084.9 302.6 1085.9 308.2 1087.3 310.1 C1088.7 312.0 1090.5 309.5 1092.1 310.8 C1093.7 312.2 1095.5 314.8 1096.9 318.5 C1098.2 322.1 1099.4 326.8 1100.4 332.8 C1101.4 338.7 1102.1 348.0 1102.8 354.2 C1103.5 360.4 1104.2 367.4 1104.5 370.0" stroke="#2a2af0" stroke-width="1.5"/><path d="M758.4 370.0 C760.6 366.8 766.6 358.1 771.5 350.7 C776.5 343.3 782.3 334.2 788.2 325.6 C794.2 317.1 801.4 307.5 807.3 299.4 C813.3 291.2 818.2 284.5 824.0 276.7 C829.8 269.0 836.3 260.4 841.9 252.9 C847.5 245.3 852.4 237.8 857.4 231.4 C862.4 225.1 866.9 220.1 871.7 214.7 C876.5 209.4 881.6 203.6 886.0 199.2 C890.4 194.9 894.8 191.5 897.9 188.5 C901.1 185.5 902.7 183.5 905.1 181.4 C907.5 179.2 909.9 176.9 912.2 175.4 C914.6 173.9 916.8 173.5 919.4 172.5 C922.0 171.6 924.6 170.3 927.7 169.7 C930.9 169.0 934.7 168.8 938.5 168.5 C942.3 168.2 946.8 168.2 950.4 168.0 C954.0 167.8 957.2 167.9 959.9 167.5 C962.7 167.2 964.7 166.7 967.1 165.9 C969.5 165.0 971.9 163.3 974.2 162.3 C976.6 161.3 979.0 160.4 981.4 159.9 C983.8 159.4 986.4 159.3 988.6 159.4 C990.7 159.5 993.6 160.1 994.5 160.6 C995.5 161.1 992.8 161.7 994.3 162.3 C995.9 162.8 1000.9 163.7 1003.8 163.9 C1006.8 164.1 1009.4 163.9 1012.2 163.5 C1015.0 163.1 1018.0 161.0 1020.5 161.6 C1023.1 162.2 1025.5 164.9 1027.7 167.0 C1029.9 169.2 1031.9 172.5 1033.7 174.2 C1035.4 175.9 1036.4 177.5 1037.9 177.1 C1039.5 176.7 1041.3 174.0 1043.2 171.8 C1045.1 169.6 1047.4 164.9 1049.2 163.9 C1050.9 163.0 1052.1 165.1 1053.9 166.3 C1055.7 167.6 1057.7 171.0 1059.9 171.3 C1062.1 171.7 1064.7 169.0 1067.0 168.2 C1069.4 167.4 1071.6 167.5 1074.2 166.6 C1076.8 165.7 1080.2 165.3 1082.5 162.8 C1084.9 160.2 1086.7 154.2 1088.5 151.5 C1090.3 148.9 1091.7 146.8 1093.3 146.8 C1094.9 146.8 1096.3 148.4 1098.0 151.5 C1099.8 154.7 1102.0 161.8 1104.0 165.9 C1106.0 169.9 1107.8 174.3 1110.0 175.9 C1112.2 177.5 1115.1 177.1 1117.1 175.4 C1119.1 173.7 1120.3 168.5 1121.9 165.9 C1123.5 163.2 1124.9 160.0 1126.7 159.4 C1128.5 158.8 1130.6 161.0 1132.6 162.3 C1134.6 163.5 1136.6 167.2 1138.6 167.0 C1140.6 166.8 1142.8 163.3 1144.5 161.1 C1146.3 158.9 1147.4 156.7 1149.3 153.9 C1151.2 151.1 1154.2 145.2 1156.0 144.4 C1157.8 143.6 1158.6 145.2 1160.0 149.2 C1161.5 153.1 1163.4 163.5 1164.8 168.2 C1166.2 173.0 1167.2 177.2 1168.4 177.8 C1169.6 178.4 1170.9 173.5 1172.0 171.8 C1173.1 170.1 1173.9 167.3 1175.1 167.5 C1176.3 167.7 1177.5 171.2 1179.1 173.0 C1180.7 174.8 1182.8 178.8 1184.6 178.3 C1186.4 177.7 1188.0 173.2 1189.9 169.4 C1191.7 165.7 1194.0 157.8 1195.8 155.8 C1197.6 153.8 1199.0 154.2 1200.6 157.5 C1202.2 160.8 1204.0 168.4 1205.4 175.4 C1206.7 182.3 1207.6 193.1 1208.5 199.2 C1209.3 205.4 1209.8 211.6 1210.6 212.4 C1211.4 213.1 1212.1 212.2 1213.2 204.0 C1214.3 195.9 1216.0 173.2 1217.3 163.5 C1218.6 153.7 1219.9 149.0 1220.9 145.6 C1221.9 142.1 1222.3 142.1 1223.2 142.7 C1224.2 143.3 1225.4 142.9 1226.8 149.2 C1228.2 155.4 1230.0 167.0 1231.6 180.2 C1233.2 193.3 1235.0 211.6 1236.4 227.9 C1237.8 244.2 1238.9 265.6 1239.9 277.9 C1241.0 290.3 1241.7 299.8 1242.6 301.8 C1243.4 303.8 1244.2 293.4 1245.2 289.9 C1246.1 286.3 1247.4 281.7 1248.3 280.3 C1249.2 278.9 1249.9 279.9 1250.7 281.5 C1251.5 283.1 1252.7 288.5 1253.1 289.9" stroke="#5a5a3c" stroke-width="1.6" stroke-opacity="0.8"/><path d="M1057.5 370.0 C1058.3 365.8 1060.5 353.3 1062.3 344.7 C1064.1 336.1 1066.0 326.8 1068.2 318.5 C1070.4 310.1 1073.4 301.0 1075.4 294.6 C1077.4 288.3 1078.6 287.1 1080.2 280.3 C1081.7 273.6 1083.3 262.0 1084.9 254.1 C1086.5 246.1 1088.1 238.2 1089.7 232.6 C1091.3 227.1 1092.9 223.5 1094.5 220.7 C1096.1 217.9 1097.6 217.7 1099.2 215.9 C1100.8 214.1 1102.4 213.5 1104.0 210.0 C1105.6 206.4 1107.2 200.2 1108.8 194.5 C1110.4 188.7 1112.0 180.8 1113.5 175.4 C1115.1 170.0 1116.7 165.4 1118.3 162.3 C1119.9 159.2 1121.3 158.1 1123.1 156.8 C1124.9 155.5 1127.1 154.4 1129.0 154.4 C1131.0 154.4 1133.1 155.7 1135.0 156.8 C1136.9 157.9 1138.5 161.0 1140.3 161.1 C1142.0 161.2 1144.0 159.3 1145.7 157.5 C1147.4 155.7 1148.8 152.5 1150.5 150.4 C1152.2 148.2 1154.4 144.6 1156.0 144.4 C1157.6 144.2 1158.6 145.2 1160.0 149.2 C1161.5 153.1 1163.4 163.5 1164.8 168.2 C1166.2 173.0 1167.2 177.2 1168.4 177.8 C1169.6 178.4 1170.9 173.5 1172.0 171.8 C1173.1 170.1 1173.9 167.3 1175.1 167.5 C1176.3 167.7 1177.5 171.2 1179.1 173.0 C1180.7 174.8 1182.8 178.8 1184.6 178.3 C1186.4 177.7 1188.0 173.2 1189.9 169.4 C1191.7 165.7 1194.0 157.8 1195.8 155.8 C1197.6 153.8 1199.0 154.2 1200.6 157.5 C1202.2 160.8 1204.0 168.4 1205.4 175.4 C1206.7 182.3 1207.6 193.1 1208.5 199.2 C1209.3 205.4 1209.8 211.6 1210.6 212.4 C1211.4 213.1 1212.1 212.2 1213.2 204.0 C1214.3 195.9 1216.0 173.2 1217.3 163.5 C1218.6 153.7 1219.9 149.0 1220.9 145.6 C1221.9 142.1 1222.3 142.1 1223.2 142.7 C1224.2 143.3 1225.4 142.9 1226.8 149.2 C1228.2 155.4 1230.0 167.0 1231.6 180.2 C1233.2 193.3 1235.0 211.6 1236.4 227.9 C1237.8 244.2 1238.9 265.6 1239.9 277.9 C1241.0 290.3 1241.7 299.8 1242.6 301.8 C1243.4 303.8 1244.2 293.4 1245.2 289.9 C1246.1 286.3 1247.4 281.7 1248.3 280.3 C1249.2 278.9 1249.9 279.9 1250.7 281.5 C1251.5 283.1 1252.7 288.5 1253.1 289.9" stroke="#f02020" stroke-width="1.6" stroke-opacity="0.88"/><path d="M718 162.0H1253" stroke="#d030d0" stroke-width="2.2"/></g>
<rect x="718.0" y="92.2" width="535.0" height="278.4" fill="none" stroke="#7a7a7a" stroke-width="1.5"/>
<g font-family='"Liberation Sans", Arial, sans-serif' font-size="15" fill="#000"><text transform="translate(985.0 84.2) scale(0.915 1)" text-anchor="middle">SPL</text><text transform="translate(719.6 87.8) scale(0.915 1)">dB</text><text transform="translate(1249.4 87.8) scale(0.915 1)" text-anchor="end">deg</text><text transform="translate(714.0 94.2) scale(0.915 1)" text-anchor="end">90</text><text transform="translate(714.0 163.8) scale(0.915 1)" text-anchor="end">85</text><text transform="translate(714.0 233.4) scale(0.915 1)" text-anchor="end">80</text><text transform="translate(714.0 303.0) scale(0.915 1)" text-anchor="end">75</text><text transform="translate(714.0 372.6) scale(0.915 1)" text-anchor="end">70</text><text transform="translate(1272.4 94.2) scale(0.915 1)" text-anchor="middle">180</text><text transform="translate(1272.4 163.8) scale(0.915 1)" text-anchor="middle">90</text><text transform="translate(1272.4 233.4) scale(0.915 1)" text-anchor="middle">0</text><text transform="translate(1272.4 303.0) scale(0.915 1)" text-anchor="middle">-90</text><text transform="translate(1272.4 372.6) scale(0.915 1)" text-anchor="middle">-180</text><text transform="translate(716.8 385.4) scale(0.915 1)" text-anchor="middle">20Hz</text><text transform="translate(788.8 385.4) scale(0.915 1)" text-anchor="middle">50</text><text transform="translate(842.6 385.4) scale(0.915 1)" text-anchor="middle">100</text><text transform="translate(896.5 385.4) scale(0.915 1)" text-anchor="middle">200</text><text transform="translate(967.7 385.4) scale(0.915 1)" text-anchor="middle">500</text><text transform="translate(1021.5 385.4) scale(0.915 1)" text-anchor="middle">1k</text><text transform="translate(1075.4 385.4) scale(0.915 1)" text-anchor="middle">2k</text><text transform="translate(1146.6 385.4) scale(0.915 1)" text-anchor="middle">5k</text><text transform="translate(1200.4 385.4) scale(0.915 1)" text-anchor="middle">10k</text><text transform="translate(1254.0 385.4) scale(0.915 1)" text-anchor="middle">20k</text></g>
<rect x="1299.7" y="69.2" width="616.6" height="323.4" fill="#fff"/>

<path d="M1340.8 103.34H1876.8" stroke="#e2e2e2" stroke-width="1.3"/>
<path d="M1340.8 114.47H1876.8" stroke="#e2e2e2" stroke-width="1.3"/>
<path d="M1340.8 125.61H1876.8" stroke="#e2e2e2" stroke-width="1.3"/>
<path d="M1340.8 136.74H1876.8" stroke="#e2e2e2" stroke-width="1.3"/>
<path d="M1340.8 159.02H1876.8" stroke="#e2e2e2" stroke-width="1.3"/>
<path d="M1340.8 170.15H1876.8" stroke="#e2e2e2" stroke-width="1.3"/>
<path d="M1340.8 181.29H1876.8" stroke="#e2e2e2" stroke-width="1.3"/>
<path d="M1340.8 192.42H1876.8" stroke="#e2e2e2" stroke-width="1.3"/>
<path d="M1340.8 214.70H1876.8" stroke="#e2e2e2" stroke-width="1.3"/>
<path d="M1340.8 225.83H1876.8" stroke="#e2e2e2" stroke-width="1.3"/>
<path d="M1340.8 236.97H1876.8" stroke="#e2e2e2" stroke-width="1.3"/>
<path d="M1340.8 248.10H1876.8" stroke="#e2e2e2" stroke-width="1.3"/>
<path d="M1340.8 270.38H1876.8" stroke="#e2e2e2" stroke-width="1.3"/>
<path d="M1340.8 281.51H1876.8" stroke="#e2e2e2" stroke-width="1.3"/>
<path d="M1340.8 292.65H1876.8" stroke="#e2e2e2" stroke-width="1.3"/>
<path d="M1340.8 303.78H1876.8" stroke="#e2e2e2" stroke-width="1.3"/>
<path d="M1340.8 326.06H1876.8" stroke="#e2e2e2" stroke-width="1.3"/>
<path d="M1340.8 337.19H1876.8" stroke="#e2e2e2" stroke-width="1.3"/>
<path d="M1340.8 348.33H1876.8" stroke="#e2e2e2" stroke-width="1.3"/>
<path d="M1340.8 359.46H1876.8" stroke="#e2e2e2" stroke-width="1.3"/>
<path d="M1370.90 92.2V370.6" stroke="#e2e2e2" stroke-width="1.3"/>
<path d="M1393.25 92.2V370.6" stroke="#e2e2e2" stroke-width="1.3"/>
<path d="M1410.59 92.2V370.6" stroke="#e2e2e2" stroke-width="1.3"/>
<path d="M1424.76 92.2V370.6" stroke="#e2e2e2" stroke-width="1.3"/>
<path d="M1436.73 92.2V370.6" stroke="#e2e2e2" stroke-width="1.3"/>
<path d="M1447.11 92.2V370.6" stroke="#e2e2e2" stroke-width="1.3"/>
<path d="M1456.26 92.2V370.6" stroke="#e2e2e2" stroke-width="1.3"/>
<path d="M1518.30 92.2V370.6" stroke="#e2e2e2" stroke-width="1.3"/>
<path d="M1549.80 92.2V370.6" stroke="#e2e2e2" stroke-width="1.3"/>
<path d="M1572.15 92.2V370.6" stroke="#e2e2e2" stroke-width="1.3"/>
<path d="M1589.49 92.2V370.6" stroke="#e2e2e2" stroke-width="1.3"/>
<path d="M1603.66 92.2V370.6" stroke="#e2e2e2" stroke-width="1.3"/>
<path d="M1615.63 92.2V370.6" stroke="#e2e2e2" stroke-width="1.3"/>
<path d="M1626.01 92.2V370.6" stroke="#e2e2e2" stroke-width="1.3"/>
<path d="M1635.16 92.2V370.6" stroke="#e2e2e2" stroke-width="1.3"/>
<path d="M1697.20 92.2V370.6" stroke="#e2e2e2" stroke-width="1.3"/>
<path d="M1728.70 92.2V370.6" stroke="#e2e2e2" stroke-width="1.3"/>
<path d="M1751.05 92.2V370.6" stroke="#e2e2e2" stroke-width="1.3"/>
<path d="M1768.39 92.2V370.6" stroke="#e2e2e2" stroke-width="1.3"/>
<path d="M1782.56 92.2V370.6" stroke="#e2e2e2" stroke-width="1.3"/>
<path d="M1794.53 92.2V370.6" stroke="#e2e2e2" stroke-width="1.3"/>
<path d="M1804.91 92.2V370.6" stroke="#e2e2e2" stroke-width="1.3"/>
<path d="M1814.06 92.2V370.6" stroke="#e2e2e2" stroke-width="1.3"/>
<path d="M1340.8 147.88H1876.8" stroke="#8c8c8c" stroke-width="1.4"/>
<path d="M1340.8 203.56H1876.8" stroke="#8c8c8c" stroke-width="1.4"/>
<path d="M1340.8 259.24H1876.8" stroke="#8c8c8c" stroke-width="1.4"/>
<path d="M1340.8 314.92H1876.8" stroke="#8c8c8c" stroke-width="1.4"/>
<path d="M1464.45 92.2V370.6" stroke="#8c8c8c" stroke-width="1.4"/>
<path d="M1643.35 92.2V370.6" stroke="#8c8c8c" stroke-width="1.4"/>
<path d="M1822.25 92.2V370.6" stroke="#8c8c8c" stroke-width="1.4"/>
<clipPath id="c21"><rect x="1340.8" y="92.2" width="536.0" height="278.4"/></clipPath>
<g clip-path="url(#c21)" fill="none" stroke-linejoin="round" stroke-linecap="round"><path d="M1341.0 141.3 C1343.5 142.0 1350.5 144.1 1355.8 145.6 C1361.0 147.1 1366.5 148.8 1372.5 150.4 C1378.4 151.9 1385.2 153.0 1391.5 154.6 C1397.9 156.3 1404.3 158.4 1410.6 160.4 C1417.0 162.4 1423.3 164.5 1429.7 166.6 C1436.1 168.7 1443.0 171.0 1448.8 173.0 C1454.5 175.0 1458.7 176.3 1464.3 178.5 C1469.8 180.7 1476.4 183.5 1482.2 186.1 C1487.9 188.7 1493.3 191.2 1498.9 194.0 C1504.4 196.8 1510.4 200.0 1515.6 202.8 C1520.7 205.7 1525.5 208.3 1529.9 211.2 C1534.2 214.1 1537.8 217.4 1541.8 220.2 C1545.8 223.1 1549.7 225.8 1553.7 228.3 C1557.7 230.9 1562.1 233.5 1565.6 235.5 C1569.2 237.5 1572.0 238.6 1575.2 240.3 C1578.3 241.9 1581.9 243.8 1584.7 245.3 C1587.5 246.8 1589.5 247.8 1591.9 249.3 C1594.2 250.8 1596.6 252.2 1599.0 254.1 C1601.4 256.0 1603.8 258.6 1606.2 260.8 C1608.6 263.0 1614.4 268.1 1613.3 267.2 C1612.3 266.3 1600.6 255.9 1600.0 255.3 C1599.4 254.7 1606.4 260.6 1609.5 263.6 C1612.7 266.6 1615.9 270.2 1619.1 273.2 C1622.3 276.1 1625.8 279.1 1628.6 281.5 C1631.4 283.9 1633.4 285.5 1635.8 287.5 C1638.2 289.5 1640.9 291.4 1642.9 293.4 C1644.9 295.4 1644.9 296.2 1647.7 299.4 C1650.5 302.6 1655.6 308.1 1659.6 312.5 C1663.6 316.9 1668.0 320.7 1671.5 325.6 C1675.1 330.6 1678.1 337.6 1681.1 342.3 C1684.1 347.1 1687.0 350.3 1689.4 354.2 C1691.8 358.2 1694.1 363.5 1695.4 366.2 C1696.7 368.8 1697.0 369.4 1697.3 370.0 M1698.0 91.4 C1699.2 94.3 1702.6 101.8 1704.9 108.6 C1707.3 115.5 1709.7 124.1 1712.1 132.5 C1714.5 140.8 1716.9 149.2 1719.2 158.7 C1721.6 168.2 1724.0 179.0 1726.4 189.7 C1728.8 200.4 1731.2 210.4 1733.5 223.1 C1735.9 235.8 1738.3 252.1 1740.7 266.0 C1743.1 279.9 1745.7 293.8 1747.9 306.6 C1750.0 319.3 1752.1 331.8 1753.8 342.3 C1755.5 352.9 1757.2 365.4 1757.9 370.0 M1697.3 370.0 L1698.0 91.4 " stroke="#9a9a9a" stroke-width="1.2"/><path d="M1341.0 155.1 C1343.5 155.6 1350.5 157.2 1355.8 158.2 C1361.0 159.2 1366.5 160.2 1372.5 161.1 C1378.4 162.0 1385.2 162.5 1391.5 163.5 C1397.9 164.5 1404.3 165.7 1410.6 167.0 C1417.0 168.4 1423.3 169.8 1429.7 171.3 C1436.1 172.8 1443.0 174.6 1448.8 176.1 C1454.5 177.7 1458.7 178.8 1464.3 180.6 C1469.8 182.5 1476.4 185.0 1482.2 187.3 C1487.9 189.6 1493.3 192.0 1498.9 194.5 C1504.4 197.0 1510.4 199.8 1515.6 202.3 C1520.7 204.9 1525.5 207.3 1529.9 210.0 C1534.2 212.6 1537.8 215.5 1541.8 218.3 C1545.8 221.1 1549.7 223.9 1553.7 226.7 C1557.7 229.4 1562.1 232.4 1565.6 235.0 C1569.2 237.6 1572.0 239.8 1575.2 242.2 C1578.3 244.5 1581.9 247.2 1584.7 249.3 C1587.5 251.4 1589.5 253.0 1591.9 254.8 C1594.2 256.6 1596.6 258.4 1599.0 260.0 C1601.4 261.7 1603.8 263.3 1606.2 264.8 C1608.6 266.3 1614.4 269.9 1613.3 269.1 C1612.3 268.3 1600.6 260.4 1600.0 260.0 C1599.4 259.7 1606.4 264.6 1609.5 267.2 C1612.7 269.8 1615.9 272.4 1619.1 275.6 C1622.3 278.7 1625.8 283.1 1628.6 286.3 C1631.4 289.5 1633.4 292.4 1635.8 294.6 C1638.2 296.8 1640.9 298.0 1642.9 299.4 C1644.9 300.8 1645.9 301.4 1647.7 303.0 C1649.5 304.6 1651.7 307.1 1653.7 308.9 C1655.6 310.7 1657.6 311.9 1659.6 313.7 C1661.6 315.5 1663.6 316.9 1665.6 319.7 C1667.6 322.5 1669.4 326.2 1671.5 330.4 C1673.7 334.6 1676.3 339.9 1678.7 344.7 C1681.1 349.5 1683.7 354.8 1685.9 359.0 C1688.0 363.2 1690.4 368.2 1691.3 370.0 M1692.5 91.4 C1692.8 91.9 1692.9 91.0 1694.2 94.3 C1695.5 97.6 1698.2 106.0 1700.2 111.0 C1702.1 116.0 1704.1 120.9 1706.1 124.1 C1708.1 127.3 1710.3 127.1 1712.1 130.1 C1713.9 133.1 1715.3 137.6 1716.9 142.0 C1718.4 146.4 1720.0 151.9 1721.6 156.3 C1723.2 160.7 1725.0 164.7 1726.4 168.2 C1727.8 171.8 1728.8 173.4 1730.0 177.8 C1731.2 182.1 1732.4 190.7 1733.5 194.5 C1734.7 198.2 1735.9 199.2 1737.1 200.4 C1738.3 201.6 1739.7 199.4 1740.7 201.6 C1741.7 203.8 1742.1 207.6 1743.1 213.5 C1744.1 219.5 1745.5 228.6 1746.7 237.4 C1747.9 246.1 1749.2 259.9 1750.2 266.0 C1751.2 272.2 1751.6 274.4 1752.6 274.4 C1753.6 274.4 1755.0 266.6 1756.2 266.0 C1757.4 265.4 1758.6 268.0 1759.8 270.8 C1761.0 273.6 1762.2 279.1 1763.4 282.7 C1764.5 286.3 1765.5 289.3 1766.9 292.2 C1768.3 295.2 1770.3 296.6 1771.7 300.6 C1773.1 304.6 1773.9 311.3 1775.3 316.1 C1776.7 320.9 1778.5 326.8 1780.0 329.2 C1781.6 331.6 1783.4 328.8 1784.8 330.4 C1786.2 332.0 1787.2 337.2 1788.4 338.7 C1789.6 340.3 1791.0 340.1 1792.0 339.9 C1793.0 339.7 1793.6 336.8 1794.4 337.6 C1795.2 338.3 1796.1 340.7 1796.7 344.7 C1797.4 348.7 1798.0 357.2 1798.4 361.4 C1798.8 365.6 1799.2 368.6 1799.4 370.0 M1800.3 91.4 C1800.7 94.3 1801.5 101.8 1802.7 108.6 C1803.9 115.5 1805.9 125.7 1807.5 132.5 C1809.1 139.2 1811.4 146.4 1812.2 149.2 M1691.3 370.0 L1692.5 91.4 M1799.4 370.0 L1800.3 91.4 " stroke="#2e8b2e" stroke-width="1.4"/><path d="M1341.0 133.7 C1343.5 134.4 1350.5 136.5 1355.8 137.9 C1361.0 139.4 1366.5 140.8 1372.5 142.5 C1378.4 144.1 1385.2 145.9 1391.5 148.0 C1397.9 150.0 1404.3 152.3 1410.6 154.6 C1417.0 156.9 1423.3 159.3 1429.7 161.8 C1436.1 164.3 1443.0 167.1 1448.8 169.4 C1454.5 171.8 1458.7 173.4 1464.3 175.9 C1469.8 178.4 1476.4 181.6 1482.2 184.5 C1487.9 187.4 1493.3 190.2 1498.9 193.3 C1504.4 196.3 1510.4 199.8 1515.6 202.8 C1520.7 205.9 1525.5 208.7 1529.9 211.6 C1534.2 214.6 1537.8 218.0 1541.8 220.7 C1545.8 223.4 1549.7 225.5 1553.7 227.9 C1557.7 230.2 1562.1 233.3 1565.6 235.0 C1569.2 236.7 1572.0 237.2 1575.2 238.1 C1578.3 239.0 1581.9 239.5 1584.7 240.5 C1587.5 241.5 1589.5 242.4 1591.9 244.1 C1594.2 245.7 1596.6 248.0 1599.0 250.5 C1601.4 253.0 1603.8 256.2 1606.2 258.9 C1608.6 261.6 1614.4 268.1 1613.3 266.7 C1612.3 265.3 1600.6 251.4 1600.0 250.5 C1599.4 249.6 1606.4 258.1 1609.5 261.2 C1612.7 264.4 1615.9 267.4 1619.1 269.6 C1622.3 271.8 1625.8 273.0 1628.6 274.4 C1631.4 275.7 1633.4 276.1 1635.8 277.9 C1638.2 279.7 1640.9 282.3 1642.9 285.1 C1644.9 287.9 1645.9 291.4 1647.7 294.6 C1649.5 297.8 1651.7 301.6 1653.7 304.2 C1655.6 306.8 1657.6 308.1 1659.6 310.1 C1661.6 312.1 1663.6 313.1 1665.6 316.1 C1667.6 319.1 1669.4 323.6 1671.5 328.0 C1673.7 332.4 1676.3 337.6 1678.7 342.3 C1681.1 347.1 1683.7 352.0 1685.9 356.6 C1688.0 361.2 1690.8 367.8 1691.8 370.0 M1692.5 91.4 C1693.4 92.7 1696.1 96.6 1697.8 99.1 C1699.4 101.5 1701.0 102.7 1702.5 106.2 C1704.1 109.8 1705.5 116.4 1707.3 120.5 C1709.1 124.7 1711.3 126.5 1713.3 131.3 C1715.3 136.0 1717.4 142.6 1719.2 149.2 C1721.0 155.7 1722.4 163.9 1724.0 170.6 C1725.6 177.4 1727.2 187.9 1728.8 189.7 C1730.4 191.5 1732.2 183.1 1733.5 181.4 C1734.9 179.6 1735.9 178.4 1737.1 179.0 C1738.3 179.6 1739.7 181.6 1740.7 184.9 C1741.7 188.3 1742.2 192.9 1743.1 199.2 C1744.0 205.6 1745.0 214.7 1745.9 223.1 C1746.9 231.4 1747.7 244.9 1749.0 249.3 C1750.4 253.8 1752.4 250.6 1753.8 249.8 C1755.2 249.0 1756.3 243.4 1757.4 244.5 C1758.5 245.7 1759.3 252.1 1760.3 256.5 C1761.2 260.8 1762.2 267.8 1763.4 270.8 C1764.5 273.8 1765.5 273.4 1766.9 274.4 C1768.3 275.4 1770.3 274.6 1771.7 276.7 C1773.1 278.9 1774.1 283.7 1775.3 287.5 C1776.5 291.2 1777.5 296.4 1778.9 299.4 C1780.2 302.4 1782.2 302.8 1783.6 305.4 C1785.0 307.9 1786.2 312.7 1787.2 314.9 C1788.2 317.1 1788.8 318.5 1789.6 318.5 C1790.4 318.5 1791.2 315.5 1792.0 314.9 C1792.8 314.3 1793.6 313.1 1794.4 314.9 C1795.2 316.7 1795.9 320.7 1796.7 325.6 C1797.5 330.6 1798.3 339.5 1799.1 344.7 C1799.9 349.9 1800.7 354.6 1801.5 356.6 C1802.3 358.6 1803.4 355.2 1803.9 356.6 C1804.4 358.0 1804.5 363.6 1804.6 365.0 M1806.0 91.4 C1806.5 93.9 1807.5 101.6 1808.7 106.2 C1809.8 110.9 1812.2 117.2 1813.0 119.3 M1691.8 370.0 L1692.5 91.4 M1804.6 365.0 L1806.0 91.4 " stroke="#2a2af0" stroke-width="1.4"/><path d="M1652.9 157.5 L1671.5 232.6 L1690.6 314.9 L1703.0 370.0 M1704.7 91.4 L1712.1 127.7 L1726.4 208.8 L1740.7 292.2 L1753.8 370.0 M1755.5 93.8 L1764.5 156.3 L1776.5 242.2 L1786.0 316.1 L1792.7 370.0 M1793.6 95.5 L1800.3 156.3 L1807.5 232.6 L1814.6 308.9 L1819.4 362.6 M1821.3 93.8 L1826.6 168.2 L1833.7 270.8 L1839.2 359.0 M1840.9 94.3 L1845.6 180.2 L1851.6 285.1 L1856.4 362.6 M1857.6 100.3 L1862.3 204.0 L1867.1 310.1 L1869.0 311.3 L1870.7 351.9 M1872.3 122.4 L1874.2 170.6 L1876.6 232.6 M1703.0 370.0 L1704.7 91.4 M1753.8 370.0 L1755.5 93.8 M1792.7 370.0 L1793.6 95.5 M1819.4 362.6 L1821.3 93.8 M1839.2 359.0 L1840.9 94.3 M1856.4 362.6 L1857.6 100.3 M1870.7 351.9 L1872.3 122.4 " stroke="#f02020" stroke-width="1.5"/><path d="M1692.5 91V371" stroke="#1e6e50" stroke-width="2.2"/><path d="M1361.7 91.4 C1362.7 93.5 1365.5 98.6 1367.7 103.8 C1369.9 109.1 1372.3 115.8 1374.8 122.9 C1377.4 130.1 1380.4 139.2 1383.2 146.8 C1386.0 154.3 1388.6 161.1 1391.5 168.2 C1394.5 175.4 1397.9 182.9 1401.1 189.7 C1404.3 196.5 1407.4 202.8 1410.6 208.8 C1413.8 214.7 1417.0 220.3 1420.2 225.5 C1423.3 230.6 1426.5 235.4 1429.7 239.8 C1432.9 244.2 1435.7 247.7 1439.2 251.7 C1442.8 255.7 1447.0 260.0 1451.2 263.6 C1455.3 267.3 1459.9 270.7 1464.3 273.6 C1468.6 276.6 1472.8 279.1 1477.4 281.5 C1482.0 283.9 1486.9 286.0 1491.7 288.0 C1496.5 289.9 1501.2 291.6 1506.0 293.0 C1510.8 294.3 1515.6 295.3 1520.3 296.3 C1525.1 297.3 1529.9 298.0 1534.6 298.7 C1539.4 299.4 1544.2 299.9 1548.9 300.4 C1553.7 300.8 1557.7 301.0 1563.2 301.3 C1568.8 301.6 1576.0 301.9 1582.3 302.0 C1588.7 302.2 1598.5 302.2 1601.4 302.3 C1604.3 302.3 1596.3 302.3 1600.0 302.3 C1603.7 302.2 1616.7 301.9 1623.8 301.8 C1631.0 301.6 1637.4 301.5 1642.9 301.3 C1648.5 301.1 1652.5 300.9 1657.2 300.8 C1662.0 300.7 1666.8 300.8 1671.5 300.6 C1676.3 300.4 1681.9 299.7 1685.9 299.4 C1689.8 299.1 1692.2 299.1 1695.4 298.7 C1698.6 298.3 1701.7 297.8 1704.9 297.0 C1708.1 296.3 1711.3 295.1 1714.5 294.2 C1717.6 293.2 1720.8 292.0 1724.0 291.1 C1727.2 290.1 1730.4 289.2 1733.5 288.7 C1736.7 288.1 1739.9 287.7 1743.1 288.0 C1746.3 288.2 1749.4 289.4 1752.6 290.3 C1755.8 291.2 1759.0 292.6 1762.2 293.4 C1765.3 294.2 1767.7 294.6 1771.7 295.1 C1775.7 295.6 1780.8 296.2 1786.0 296.5 C1791.2 296.9 1794.0 296.9 1802.7 297.0 C1811.4 297.1 1830.5 296.8 1838.5 297.0 C1846.4 297.2 1846.4 298.1 1850.4 298.2 C1854.4 298.3 1858.0 297.3 1862.3 297.5 C1866.7 297.7 1874.2 299.1 1876.6 299.4" stroke="#4682b4" stroke-width="2.8"/><path d="M1341.0 105.0 C1341.9 106.8 1344.4 111.4 1346.2 115.8 C1348.1 120.1 1350.2 125.3 1352.2 131.3 C1354.2 137.2 1356.2 145.0 1358.2 151.5 C1360.1 158.1 1362.1 164.7 1364.1 170.6 C1366.1 176.6 1368.1 182.3 1370.1 187.3 C1372.1 192.3 1374.1 196.9 1376.0 200.4 C1378.0 204.0 1379.8 206.4 1382.0 208.8 C1384.2 211.2 1386.0 212.8 1389.2 214.7 C1392.3 216.7 1396.7 218.5 1401.1 220.7 C1405.5 222.9 1411.4 226.0 1415.4 227.9 C1419.4 229.7 1421.0 230.2 1424.9 231.9 C1428.9 233.6 1434.5 235.8 1439.2 237.9 C1444.0 239.9 1449.4 242.2 1453.5 244.1 C1457.7 245.9 1460.3 247.1 1464.3 248.8 C1468.3 250.6 1472.8 252.7 1477.4 254.8 C1482.0 256.9 1486.9 259.2 1491.7 261.2 C1496.5 263.3 1501.6 265.5 1506.0 267.2 C1510.4 268.9 1515.2 270.6 1517.9 271.5 C1520.7 272.4 1520.7 272.4 1522.7 272.7 C1524.7 273.0 1527.5 272.9 1529.9 273.2 C1532.2 273.4 1534.6 273.6 1537.0 274.4 C1539.4 275.1 1541.4 276.0 1544.2 277.5 C1546.9 278.9 1550.5 281.3 1553.7 283.2 C1556.9 285.0 1560.1 287.0 1563.2 288.7 C1566.4 290.4 1569.8 292.2 1572.8 293.4 C1575.8 294.6 1578.7 295.3 1581.1 295.8 C1583.5 296.3 1584.9 296.4 1587.1 296.3 C1589.3 296.2 1591.7 295.5 1594.2 295.1 C1596.8 294.7 1600.0 294.2 1602.6 294.2 C1605.2 294.2 1609.4 295.1 1609.7 295.1 C1610.1 295.1 1604.4 294.0 1604.8 294.2 C1605.1 294.3 1609.1 295.1 1611.9 295.8 C1614.7 296.5 1618.5 297.7 1621.5 298.2 C1624.4 298.7 1627.0 299.0 1629.8 298.9 C1632.6 298.8 1635.2 297.5 1638.2 297.5 C1641.1 297.5 1644.5 298.4 1647.7 298.9 C1650.9 299.4 1654.1 300.3 1657.2 300.6 C1660.4 300.9 1663.6 300.9 1666.8 300.6 C1670.0 300.3 1673.1 299.2 1676.3 298.9 C1679.5 298.6 1682.7 299.0 1685.9 298.9 C1689.0 298.8 1692.2 298.7 1695.4 298.2 C1698.6 297.7 1701.7 296.8 1704.9 295.8 C1708.1 294.8 1711.3 293.2 1714.5 292.2 C1717.6 291.2 1720.8 290.6 1724.0 289.9 C1727.2 289.1 1730.4 288.3 1733.5 288.0 C1736.7 287.6 1739.9 287.2 1743.1 287.5 C1746.3 287.8 1749.4 288.9 1752.6 289.9 C1755.8 290.8 1759.0 292.2 1762.2 293.0 C1765.3 293.8 1767.7 294.1 1771.7 294.6 C1775.7 295.1 1780.8 295.7 1786.0 296.1 C1791.2 296.4 1797.1 296.5 1802.7 296.5 C1808.3 296.6 1813.4 296.5 1819.4 296.5 C1825.4 296.5 1832.1 296.5 1838.5 296.5 C1844.8 296.6 1852.4 296.9 1857.6 297.0 C1862.7 297.2 1866.3 297.1 1869.5 297.5 C1872.7 297.9 1875.4 299.1 1876.6 299.4" stroke="#555555" stroke-width="2.8"/><path d="M1340.8 231.3H1876.8" stroke="#ff50ff" stroke-width="2.2"/></g>
<rect x="1340.8" y="92.2" width="536.0" height="278.4" fill="none" stroke="#7a7a7a" stroke-width="1.5"/>
<g font-family='"Liberation Sans", Arial, sans-serif' font-size="15" fill="#000"><text transform="translate(1608.3 84.2) scale(0.915 1)" text-anchor="middle">GD &amp; Phase</text><text transform="translate(1342.4 87.8) scale(0.915 1)">ms</text><text transform="translate(1873.2 87.8) scale(0.915 1)" text-anchor="end">deg</text><text transform="translate(1335.5 94.2) scale(0.915 1)" text-anchor="end">4</text><text transform="translate(1335.5 149.9) scale(0.915 1)" text-anchor="end">3</text><text transform="translate(1335.5 205.6) scale(0.915 1)" text-anchor="end">2</text><text transform="translate(1335.5 261.2) scale(0.915 1)" text-anchor="end">1</text><text transform="translate(1335.5 316.9) scale(0.915 1)" text-anchor="end">0</text><text transform="translate(1334.4 372.6) scale(0.915 1)" text-anchor="end">-1</text><text transform="translate(1896.2 94.2) scale(0.915 1)" text-anchor="middle">180</text><text transform="translate(1896.2 149.9) scale(0.915 1)" text-anchor="middle">108</text><text transform="translate(1896.2 205.6) scale(0.915 1)" text-anchor="middle">36</text><text transform="translate(1896.2 261.2) scale(0.915 1)" text-anchor="middle">-36</text><text transform="translate(1896.2 316.9) scale(0.915 1)" text-anchor="middle">-108</text><text transform="translate(1896.2 372.6) scale(0.915 1)" text-anchor="middle">-180</text><text transform="translate(1339.6 385.4) scale(0.915 1)" text-anchor="middle">20Hz</text><text transform="translate(1411.6 385.4) scale(0.915 1)" text-anchor="middle">50</text><text transform="translate(1465.4 385.4) scale(0.915 1)" text-anchor="middle">100</text><text transform="translate(1519.3 385.4) scale(0.915 1)" text-anchor="middle">200</text><text transform="translate(1590.5 385.4) scale(0.915 1)" text-anchor="middle">500</text><text transform="translate(1644.3 385.4) scale(0.915 1)" text-anchor="middle">1k</text><text transform="translate(1698.2 385.4) scale(0.915 1)" text-anchor="middle">2k</text><text transform="translate(1769.4 385.4) scale(0.915 1)" text-anchor="middle">5k</text><text transform="translate(1823.2 385.4) scale(0.915 1)" text-anchor="middle">10k</text><text transform="translate(1877.8 385.4) scale(0.915 1)" text-anchor="middle">20k</text></g>
<rect x="677.5" y="399.7" width="615.0" height="323.9" fill="#fff"/>

<path d="M718.0 437.41H1253.0" stroke="#e2e2e2" stroke-width="1.3"/>
<path d="M718.0 451.32H1253.0" stroke="#e2e2e2" stroke-width="1.3"/>
<path d="M718.0 465.23H1253.0" stroke="#e2e2e2" stroke-width="1.3"/>
<path d="M718.0 479.14H1253.0" stroke="#e2e2e2" stroke-width="1.3"/>
<path d="M718.0 506.96H1253.0" stroke="#e2e2e2" stroke-width="1.3"/>
<path d="M718.0 520.87H1253.0" stroke="#e2e2e2" stroke-width="1.3"/>
<path d="M718.0 534.78H1253.0" stroke="#e2e2e2" stroke-width="1.3"/>
<path d="M718.0 548.69H1253.0" stroke="#e2e2e2" stroke-width="1.3"/>
<path d="M718.0 576.51H1253.0" stroke="#e2e2e2" stroke-width="1.3"/>
<path d="M718.0 590.42H1253.0" stroke="#e2e2e2" stroke-width="1.3"/>
<path d="M718.0 604.33H1253.0" stroke="#e2e2e2" stroke-width="1.3"/>
<path d="M718.0 618.24H1253.0" stroke="#e2e2e2" stroke-width="1.3"/>
<path d="M718.0 646.06H1253.0" stroke="#e2e2e2" stroke-width="1.3"/>
<path d="M718.0 659.97H1253.0" stroke="#e2e2e2" stroke-width="1.3"/>
<path d="M718.0 673.88H1253.0" stroke="#e2e2e2" stroke-width="1.3"/>
<path d="M718.0 687.79H1253.0" stroke="#e2e2e2" stroke-width="1.3"/>
<path d="M748.10 423.5V701.7" stroke="#e2e2e2" stroke-width="1.3"/>
<path d="M770.45 423.5V701.7" stroke="#e2e2e2" stroke-width="1.3"/>
<path d="M787.79 423.5V701.7" stroke="#e2e2e2" stroke-width="1.3"/>
<path d="M801.96 423.5V701.7" stroke="#e2e2e2" stroke-width="1.3"/>
<path d="M813.93 423.5V701.7" stroke="#e2e2e2" stroke-width="1.3"/>
<path d="M824.31 423.5V701.7" stroke="#e2e2e2" stroke-width="1.3"/>
<path d="M833.46 423.5V701.7" stroke="#e2e2e2" stroke-width="1.3"/>
<path d="M895.50 423.5V701.7" stroke="#e2e2e2" stroke-width="1.3"/>
<path d="M927.00 423.5V701.7" stroke="#e2e2e2" stroke-width="1.3"/>
<path d="M949.35 423.5V701.7" stroke="#e2e2e2" stroke-width="1.3"/>
<path d="M966.69 423.5V701.7" stroke="#e2e2e2" stroke-width="1.3"/>
<path d="M980.86 423.5V701.7" stroke="#e2e2e2" stroke-width="1.3"/>
<path d="M992.83 423.5V701.7" stroke="#e2e2e2" stroke-width="1.3"/>
<path d="M1003.21 423.5V701.7" stroke="#e2e2e2" stroke-width="1.3"/>
<path d="M1012.36 423.5V701.7" stroke="#e2e2e2" stroke-width="1.3"/>
<path d="M1074.40 423.5V701.7" stroke="#e2e2e2" stroke-width="1.3"/>
<path d="M1105.90 423.5V701.7" stroke="#e2e2e2" stroke-width="1.3"/>
<path d="M1128.25 423.5V701.7" stroke="#e2e2e2" stroke-width="1.3"/>
<path d="M1145.59 423.5V701.7" stroke="#e2e2e2" stroke-width="1.3"/>
<path d="M1159.76 423.5V701.7" stroke="#e2e2e2" stroke-width="1.3"/>
<path d="M1171.73 423.5V701.7" stroke="#e2e2e2" stroke-width="1.3"/>
<path d="M1182.11 423.5V701.7" stroke="#e2e2e2" stroke-width="1.3"/>
<path d="M1191.26 423.5V701.7" stroke="#e2e2e2" stroke-width="1.3"/>
<path d="M718.0 493.05H1253.0" stroke="#8c8c8c" stroke-width="1.4"/>
<path d="M718.0 562.60H1253.0" stroke="#8c8c8c" stroke-width="1.4"/>
<path d="M718.0 632.15H1253.0" stroke="#8c8c8c" stroke-width="1.4"/>
<path d="M841.65 423.5V701.7" stroke="#8c8c8c" stroke-width="1.4"/>
<path d="M1020.55 423.5V701.7" stroke="#8c8c8c" stroke-width="1.4"/>
<path d="M1199.45 423.5V701.7" stroke="#8c8c8c" stroke-width="1.4"/>
<clipPath id="c12"><rect x="718.0" y="423.5" width="535.0" height="278.2"/></clipPath>
<g clip-path="url(#c12)" fill="none" stroke-linejoin="round" stroke-linecap="round"><path d="M758.4 701.1 C760.6 697.9 766.6 689.2 771.5 681.8 C776.5 674.4 782.3 665.3 788.2 656.7 C794.2 648.2 801.4 638.6 807.3 630.5 C813.3 622.3 818.2 615.6 824.0 607.8 C829.8 600.1 836.3 591.5 841.9 584.0 C847.5 576.4 852.4 568.9 857.4 562.5 C862.4 556.2 866.9 551.2 871.7 545.8 C876.5 540.5 881.6 534.7 886.0 530.3 C890.4 526.0 894.8 522.6 897.9 519.6 C901.1 516.6 902.7 514.6 905.1 512.5 C907.5 510.3 909.9 508.0 912.2 506.5 C914.6 505.0 916.8 504.6 919.4 503.6 C922.0 502.7 924.6 501.4 927.7 500.8 C930.9 500.1 934.7 499.9 938.5 499.6 C942.3 499.3 946.8 499.3 950.4 499.1 C954.0 498.9 957.2 499.0 959.9 498.6 C962.7 498.3 964.7 497.8 967.1 497.0 C969.5 496.1 971.9 494.4 974.2 493.4 C976.6 492.4 979.0 491.5 981.4 491.0 C983.8 490.5 986.4 490.4 988.6 490.5 C990.7 490.6 993.6 491.2 994.5 491.7 C995.5 492.2 992.8 492.8 994.3 493.4 C995.9 493.9 1000.9 494.8 1003.8 495.0 C1006.8 495.2 1009.4 495.0 1012.2 494.6 C1015.0 494.2 1018.0 492.1 1020.5 492.7 C1023.1 493.3 1025.5 496.0 1027.7 498.1 C1029.9 500.3 1031.9 503.6 1033.7 505.3 C1035.4 507.0 1036.4 508.6 1037.9 508.2 C1039.5 507.8 1041.3 505.1 1043.2 502.9 C1045.1 500.7 1047.4 496.0 1049.2 495.0 C1050.9 494.1 1052.1 496.2 1053.9 497.4 C1055.7 498.7 1057.7 502.1 1059.9 502.4 C1062.1 502.8 1064.7 500.1 1067.0 499.3 C1069.4 498.5 1071.6 498.6 1074.2 497.7 C1076.8 496.8 1080.2 496.4 1082.5 493.9 C1084.9 491.3 1086.7 485.3 1088.5 482.6 C1090.3 480.0 1091.7 477.9 1093.3 477.9 C1094.9 477.9 1096.3 479.5 1098.0 482.6 C1099.8 485.8 1102.0 492.9 1104.0 497.0 C1106.0 501.0 1107.8 505.4 1110.0 507.0 C1112.2 508.6 1115.1 508.2 1117.1 506.5 C1119.1 504.8 1120.3 499.6 1121.9 497.0 C1123.5 494.3 1124.9 491.1 1126.7 490.5 C1128.5 489.9 1130.6 492.1 1132.6 493.4 C1134.6 494.6 1136.6 498.3 1138.6 498.1 C1140.6 497.9 1142.8 494.4 1144.5 492.2 C1146.3 490.0 1147.4 487.8 1149.3 485.0 C1151.2 482.2 1154.2 476.3 1156.0 475.5 C1157.8 474.7 1158.6 476.3 1160.0 480.3 C1161.5 484.2 1163.4 494.6 1164.8 499.3 C1166.2 504.1 1167.2 508.3 1168.4 508.9 C1169.6 509.5 1170.9 504.6 1172.0 502.9 C1173.1 501.2 1173.9 498.4 1175.1 498.6 C1176.3 498.8 1177.5 502.3 1179.1 504.1 C1180.7 505.9 1182.8 509.9 1184.6 509.4 C1186.4 508.8 1188.0 504.3 1189.9 500.5 C1191.7 496.8 1194.0 488.9 1195.8 486.9 C1197.6 484.9 1199.0 485.3 1200.6 488.6 C1202.2 491.9 1204.0 499.5 1205.4 506.5 C1206.7 513.4 1207.6 524.2 1208.5 530.3 C1209.3 536.5 1209.8 542.7 1210.6 543.5 C1211.4 544.2 1212.1 543.3 1213.2 535.1 C1214.3 527.0 1216.0 504.3 1217.3 494.6 C1218.6 484.8 1219.9 480.1 1220.9 476.7 C1221.9 473.2 1222.3 473.2 1223.2 473.8 C1224.2 474.4 1225.4 474.0 1226.8 480.3 C1228.2 486.5 1230.0 498.1 1231.6 511.3 C1233.2 524.4 1235.0 542.7 1236.4 559.0 C1237.8 575.3 1238.9 596.7 1239.9 609.0 C1241.0 621.4 1241.7 630.9 1242.6 632.9 C1243.4 634.9 1244.2 624.5 1245.2 621.0 C1246.1 617.4 1247.4 612.8 1248.3 611.4 C1249.2 610.0 1249.9 611.0 1250.7 612.6 C1251.5 614.2 1252.7 619.6 1253.1 621.0" stroke="#55558a" stroke-width="1.8"/><path d="M718 590.7H1253" stroke="#e03020" stroke-width="2.0"/><path d="M718 493.7H1253" stroke="#d030d0" stroke-width="2.2"/></g>
<rect x="718.0" y="423.5" width="535.0" height="278.2" fill="none" stroke="#7a7a7a" stroke-width="1.5"/>
<g font-family='"Liberation Sans", Arial, sans-serif' font-size="15" fill="#000"><text transform="translate(985.0 414.7) scale(0.915 1)" text-anchor="middle">Power &amp; DI (2pi)</text><text transform="translate(719.6 419.1) scale(0.915 1)">dB</text><text transform="translate(1249.4 419.1) scale(0.915 1)" text-anchor="end">dB</text><text transform="translate(714.0 425.5) scale(0.915 1)" text-anchor="end">90</text><text transform="translate(714.0 495.1) scale(0.915 1)" text-anchor="end">85</text><text transform="translate(714.0 564.6) scale(0.915 1)" text-anchor="end">80</text><text transform="translate(714.0 634.2) scale(0.915 1)" text-anchor="end">75</text><text transform="translate(714.0 703.7) scale(0.915 1)" text-anchor="end">70</text><text transform="translate(1272.4 425.5) scale(0.915 1)" text-anchor="middle">15</text><text transform="translate(1272.4 495.1) scale(0.915 1)" text-anchor="middle">10</text><text transform="translate(1272.4 564.6) scale(0.915 1)" text-anchor="middle">5</text><text transform="translate(1272.4 634.2) scale(0.915 1)" text-anchor="middle">0</text><text transform="translate(1272.4 703.7) scale(0.915 1)" text-anchor="middle">-5</text><text transform="translate(716.8 716.5) scale(0.915 1)" text-anchor="middle">20Hz</text><text transform="translate(788.8 716.5) scale(0.915 1)" text-anchor="middle">50</text><text transform="translate(842.6 716.5) scale(0.915 1)" text-anchor="middle">100</text><text transform="translate(896.5 716.5) scale(0.915 1)" text-anchor="middle">200</text><text transform="translate(967.7 716.5) scale(0.915 1)" text-anchor="middle">500</text><text transform="translate(1021.5 716.5) scale(0.915 1)" text-anchor="middle">1k</text><text transform="translate(1075.4 716.5) scale(0.915 1)" text-anchor="middle">2k</text><text transform="translate(1146.6 716.5) scale(0.915 1)" text-anchor="middle">5k</text><text transform="translate(1200.4 716.5) scale(0.915 1)" text-anchor="middle">10k</text><text transform="translate(1254.0 716.5) scale(0.915 1)" text-anchor="middle">20k</text></g>
<rect x="1299.7" y="399.7" width="616.6" height="323.9" fill="#fff"/>

<path d="M1340.8 429.06H1876.8" stroke="#e2e2e2" stroke-width="1.3"/>
<path d="M1340.8 434.63H1876.8" stroke="#e2e2e2" stroke-width="1.3"/>
<path d="M1340.8 440.19H1876.8" stroke="#e2e2e2" stroke-width="1.3"/>
<path d="M1340.8 445.76H1876.8" stroke="#e2e2e2" stroke-width="1.3"/>
<path d="M1340.8 456.88H1876.8" stroke="#e2e2e2" stroke-width="1.3"/>
<path d="M1340.8 462.45H1876.8" stroke="#e2e2e2" stroke-width="1.3"/>
<path d="M1340.8 468.01H1876.8" stroke="#e2e2e2" stroke-width="1.3"/>
<path d="M1340.8 473.58H1876.8" stroke="#e2e2e2" stroke-width="1.3"/>
<path d="M1340.8 484.70H1876.8" stroke="#e2e2e2" stroke-width="1.3"/>
<path d="M1340.8 490.27H1876.8" stroke="#e2e2e2" stroke-width="1.3"/>
<path d="M1340.8 495.83H1876.8" stroke="#e2e2e2" stroke-width="1.3"/>
<path d="M1340.8 501.40H1876.8" stroke="#e2e2e2" stroke-width="1.3"/>
<path d="M1340.8 512.52H1876.8" stroke="#e2e2e2" stroke-width="1.3"/>
<path d="M1340.8 518.09H1876.8" stroke="#e2e2e2" stroke-width="1.3"/>
<path d="M1340.8 523.65H1876.8" stroke="#e2e2e2" stroke-width="1.3"/>
<path d="M1340.8 529.22H1876.8" stroke="#e2e2e2" stroke-width="1.3"/>
<path d="M1340.8 540.34H1876.8" stroke="#e2e2e2" stroke-width="1.3"/>
<path d="M1340.8 545.91H1876.8" stroke="#e2e2e2" stroke-width="1.3"/>
<path d="M1340.8 551.47H1876.8" stroke="#e2e2e2" stroke-width="1.3"/>
<path d="M1340.8 557.04H1876.8" stroke="#e2e2e2" stroke-width="1.3"/>
<path d="M1340.8 568.16H1876.8" stroke="#e2e2e2" stroke-width="1.3"/>
<path d="M1340.8 573.73H1876.8" stroke="#e2e2e2" stroke-width="1.3"/>
<path d="M1340.8 579.29H1876.8" stroke="#e2e2e2" stroke-width="1.3"/>
<path d="M1340.8 584.86H1876.8" stroke="#e2e2e2" stroke-width="1.3"/>
<path d="M1340.8 595.98H1876.8" stroke="#e2e2e2" stroke-width="1.3"/>
<path d="M1340.8 601.55H1876.8" stroke="#e2e2e2" stroke-width="1.3"/>
<path d="M1340.8 607.11H1876.8" stroke="#e2e2e2" stroke-width="1.3"/>
<path d="M1340.8 612.68H1876.8" stroke="#e2e2e2" stroke-width="1.3"/>
<path d="M1340.8 623.80H1876.8" stroke="#e2e2e2" stroke-width="1.3"/>
<path d="M1340.8 629.37H1876.8" stroke="#e2e2e2" stroke-width="1.3"/>
<path d="M1340.8 634.93H1876.8" stroke="#e2e2e2" stroke-width="1.3"/>
<path d="M1340.8 640.50H1876.8" stroke="#e2e2e2" stroke-width="1.3"/>
<path d="M1340.8 651.62H1876.8" stroke="#e2e2e2" stroke-width="1.3"/>
<path d="M1340.8 657.19H1876.8" stroke="#e2e2e2" stroke-width="1.3"/>
<path d="M1340.8 662.75H1876.8" stroke="#e2e2e2" stroke-width="1.3"/>
<path d="M1340.8 668.32H1876.8" stroke="#e2e2e2" stroke-width="1.3"/>
<path d="M1340.8 679.44H1876.8" stroke="#e2e2e2" stroke-width="1.3"/>
<path d="M1340.8 685.01H1876.8" stroke="#e2e2e2" stroke-width="1.3"/>
<path d="M1340.8 690.57H1876.8" stroke="#e2e2e2" stroke-width="1.3"/>
<path d="M1340.8 696.14H1876.8" stroke="#e2e2e2" stroke-width="1.3"/>
<path d="M1370.90 423.5V701.7" stroke="#e2e2e2" stroke-width="1.3"/>
<path d="M1393.25 423.5V701.7" stroke="#e2e2e2" stroke-width="1.3"/>
<path d="M1410.59 423.5V701.7" stroke="#e2e2e2" stroke-width="1.3"/>
<path d="M1424.76 423.5V701.7" stroke="#e2e2e2" stroke-width="1.3"/>
<path d="M1436.73 423.5V701.7" stroke="#e2e2e2" stroke-width="1.3"/>
<path d="M1447.11 423.5V701.7" stroke="#e2e2e2" stroke-width="1.3"/>
<path d="M1456.26 423.5V701.7" stroke="#e2e2e2" stroke-width="1.3"/>
<path d="M1518.30 423.5V701.7" stroke="#e2e2e2" stroke-width="1.3"/>
<path d="M1549.80 423.5V701.7" stroke="#e2e2e2" stroke-width="1.3"/>
<path d="M1572.15 423.5V701.7" stroke="#e2e2e2" stroke-width="1.3"/>
<path d="M1589.49 423.5V701.7" stroke="#e2e2e2" stroke-width="1.3"/>
<path d="M1603.66 423.5V701.7" stroke="#e2e2e2" stroke-width="1.3"/>
<path d="M1615.63 423.5V701.7" stroke="#e2e2e2" stroke-width="1.3"/>
<path d="M1626.01 423.5V701.7" stroke="#e2e2e2" stroke-width="1.3"/>
<path d="M1635.16 423.5V701.7" stroke="#e2e2e2" stroke-width="1.3"/>
<path d="M1697.20 423.5V701.7" stroke="#e2e2e2" stroke-width="1.3"/>
<path d="M1728.70 423.5V701.7" stroke="#e2e2e2" stroke-width="1.3"/>
<path d="M1751.05 423.5V701.7" stroke="#e2e2e2" stroke-width="1.3"/>
<path d="M1768.39 423.5V701.7" stroke="#e2e2e2" stroke-width="1.3"/>
<path d="M1782.56 423.5V701.7" stroke="#e2e2e2" stroke-width="1.3"/>
<path d="M1794.53 423.5V701.7" stroke="#e2e2e2" stroke-width="1.3"/>
<path d="M1804.91 423.5V701.7" stroke="#e2e2e2" stroke-width="1.3"/>
<path d="M1814.06 423.5V701.7" stroke="#e2e2e2" stroke-width="1.3"/>
<path d="M1340.8 451.32H1876.8" stroke="#8c8c8c" stroke-width="1.4"/>
<path d="M1340.8 479.14H1876.8" stroke="#8c8c8c" stroke-width="1.4"/>
<path d="M1340.8 506.96H1876.8" stroke="#8c8c8c" stroke-width="1.4"/>
<path d="M1340.8 534.78H1876.8" stroke="#8c8c8c" stroke-width="1.4"/>
<path d="M1340.8 562.60H1876.8" stroke="#8c8c8c" stroke-width="1.4"/>
<path d="M1340.8 590.42H1876.8" stroke="#8c8c8c" stroke-width="1.4"/>
<path d="M1340.8 618.24H1876.8" stroke="#8c8c8c" stroke-width="1.4"/>
<path d="M1340.8 646.06H1876.8" stroke="#8c8c8c" stroke-width="1.4"/>
<path d="M1340.8 673.88H1876.8" stroke="#8c8c8c" stroke-width="1.4"/>
<path d="M1464.45 423.5V701.7" stroke="#8c8c8c" stroke-width="1.4"/>
<path d="M1643.35 423.5V701.7" stroke="#8c8c8c" stroke-width="1.4"/>
<path d="M1822.25 423.5V701.7" stroke="#8c8c8c" stroke-width="1.4"/>
<clipPath id="c22"><rect x="1340.8" y="423.5" width="536.0" height="278.2"/></clipPath>
<g clip-path="url(#c22)" fill="none" stroke-linejoin="round" stroke-linecap="round"><path d="M1653.6 701.8 C1655.9 697.2 1662.3 685.4 1667.3 673.9 C1672.4 662.4 1678.3 646.0 1683.8 632.9 C1689.2 619.8 1695.2 606.1 1700.2 595.2 C1705.1 584.2 1709.5 574.6 1713.3 567.3 C1717.1 559.9 1720.1 555.1 1723.1 550.9 C1726.1 546.6 1728.3 544.6 1731.3 542.0 C1734.3 539.4 1737.6 537.6 1741.2 535.4 C1744.7 533.3 1748.6 531.5 1752.7 528.9 C1756.8 526.3 1761.4 522.4 1765.8 519.7 C1770.2 517.0 1774.5 515.8 1778.9 512.5 C1783.3 509.2 1787.7 504.0 1792.0 500.0 C1796.4 496.0 1801.3 491.5 1805.2 488.5 C1809.0 485.5 1812.0 483.3 1815.0 482.0 C1818.0 480.6 1820.5 480.3 1823.2 480.3 C1825.9 480.3 1827.9 480.6 1831.4 482.0 C1835.0 483.3 1840.7 486.6 1844.5 488.5 C1848.4 490.4 1851.6 492.3 1854.4 493.4 C1857.1 494.5 1858.8 494.0 1860.9 495.1 C1863.1 496.2 1864.8 498.4 1867.5 500.0 C1870.2 501.6 1875.4 504.1 1877.0 504.9" stroke="#f03030" stroke-width="1.4"/><path d="M1340.9 479.7 C1346.1 479.9 1358.6 481.0 1372.0 481.0 C1385.4 480.9 1405.9 479.8 1421.3 479.3 C1436.6 478.9 1447.5 478.3 1463.9 478.3 C1480.3 478.4 1501.6 479.1 1519.7 479.7 C1537.7 480.2 1558.0 481.5 1572.2 481.6 C1586.4 481.8 1595.2 481.1 1605.0 480.6 C1614.8 480.2 1624.7 478.8 1631.3 479.0 C1637.8 479.2 1639.5 481.4 1644.4 482.0 C1649.3 482.6 1654.2 482.7 1660.8 482.6 C1667.3 482.6 1678.0 481.7 1683.8 481.6 C1689.5 481.5 1692.0 481.4 1695.2 482.0 C1698.5 482.6 1700.7 483.3 1703.4 485.2 C1706.2 487.1 1708.9 489.6 1711.6 493.4 C1714.4 497.3 1716.3 500.5 1719.8 508.2 C1723.4 515.9 1728.0 528.2 1733.0 539.4 C1737.9 550.6 1743.9 564.0 1749.4 575.5 C1754.8 587.0 1760.3 597.2 1765.8 608.3 C1771.3 619.3 1776.7 630.8 1782.2 641.8 C1787.7 652.7 1793.6 663.9 1798.6 673.9 C1803.6 683.9 1810.1 697.2 1812.4 701.8" stroke="#1e6a5a" stroke-width="1.8"/><path d="M1340.8 479.4H1876.8" stroke="#e030e0" stroke-width="2.2"/></g>
<rect x="1340.8" y="423.5" width="536.0" height="278.2" fill="none" stroke="#7a7a7a" stroke-width="1.5"/>
<g font-family='"Liberation Sans", Arial, sans-serif' font-size="15" fill="#000"><text transform="translate(1608.3 414.7) scale(0.915 1)" text-anchor="middle">Filter</text><text transform="translate(1342.4 419.1) scale(0.915 1)">dB</text><text transform="translate(1873.2 419.1) scale(0.915 1)" text-anchor="end">deg</text><text transform="translate(1336.8 425.5) scale(0.915 1)" text-anchor="end">10</text><text transform="translate(1335.5 453.3) scale(0.915 1)" text-anchor="end">5</text><text transform="translate(1335.5 481.1) scale(0.915 1)" text-anchor="end">0</text><text transform="translate(1334.4 509.0) scale(0.915 1)" text-anchor="end">-5</text><text transform="translate(1335.4 536.8) scale(0.915 1)" text-anchor="end">-10</text><text transform="translate(1335.4 564.6) scale(0.915 1)" text-anchor="end">-15</text><text transform="translate(1335.4 592.4) scale(0.915 1)" text-anchor="end">-20</text><text transform="translate(1335.4 620.2) scale(0.915 1)" text-anchor="end">-25</text><text transform="translate(1335.4 648.1) scale(0.915 1)" text-anchor="end">-30</text><text transform="translate(1335.4 675.9) scale(0.915 1)" text-anchor="end">-35</text><text transform="translate(1335.4 703.7) scale(0.915 1)" text-anchor="end">-40</text><text transform="translate(1896.2 425.5) scale(0.915 1)" text-anchor="middle">180</text><text transform="translate(1896.2 453.3) scale(0.915 1)" text-anchor="middle">144</text><text transform="translate(1896.2 481.1) scale(0.915 1)" text-anchor="middle">108</text><text transform="translate(1896.2 509.0) scale(0.915 1)" text-anchor="middle">72</text><text transform="translate(1896.2 536.8) scale(0.915 1)" text-anchor="middle">36</text><text transform="translate(1896.2 564.6) scale(0.915 1)" text-anchor="middle">0</text><text transform="translate(1896.2 592.4) scale(0.915 1)" text-anchor="middle">-36</text><text transform="translate(1896.2 620.2) scale(0.915 1)" text-anchor="middle">-72</text><text transform="translate(1896.2 648.1) scale(0.915 1)" text-anchor="middle">-108</text><text transform="translate(1896.2 675.9) scale(0.915 1)" text-anchor="middle">-144</text><text transform="translate(1896.2 703.7) scale(0.915 1)" text-anchor="middle">-180</text><text transform="translate(1339.6 716.5) scale(0.915 1)" text-anchor="middle">20Hz</text><text transform="translate(1411.6 716.5) scale(0.915 1)" text-anchor="middle">50</text><text transform="translate(1465.4 716.5) scale(0.915 1)" text-anchor="middle">100</text><text transform="translate(1519.3 716.5) scale(0.915 1)" text-anchor="middle">200</text><text transform="translate(1590.5 716.5) scale(0.915 1)" text-anchor="middle">500</text><text transform="translate(1644.3 716.5) scale(0.915 1)" text-anchor="middle">1k</text><text transform="translate(1698.2 716.5) scale(0.915 1)" text-anchor="middle">2k</text><text transform="translate(1769.4 716.5) scale(0.915 1)" text-anchor="middle">5k</text><text transform="translate(1823.2 716.5) scale(0.915 1)" text-anchor="middle">10k</text><text transform="translate(1877.8 716.5) scale(0.915 1)" text-anchor="middle">20k</text></g>
<rect x="677.5" y="731.3" width="615.0" height="326.2" fill="#fff"/>
<linearGradient id="dirg" x1="0" y1="0" x2="1" y2="0"><stop offset="0.0000" stop-color="#530053"/><stop offset="0.0037" stop-color="#5b005b"/><stop offset="0.0075" stop-color="#630063"/><stop offset="0.0112" stop-color="#6c006c"/><stop offset="0.0149" stop-color="#740074"/><stop offset="0.0187" stop-color="#7c007c"/><stop offset="0.0224" stop-color="#850085"/><stop offset="0.0261" stop-color="#8d008d"/><stop offset="0.0299" stop-color="#950095"/><stop offset="0.0336" stop-color="#9d009d"/><stop offset="0.0373" stop-color="#a600a6"/><stop offset="0.0410" stop-color="#af00af"/><stop offset="0.0448" stop-color="#b800b8"/><stop offset="0.0485" stop-color="#c100c1"/><stop offset="0.0522" stop-color="#ca00ca"/><stop offset="0.0560" stop-color="#d300d3"/><stop offset="0.0597" stop-color="#dc00dc"/><stop offset="0.0634" stop-color="#e500e5"/><stop offset="0.0672" stop-color="#ee00ee"/><stop offset="0.0709" stop-color="#f700f7"/><stop offset="0.0746" stop-color="#fe00ff"/><stop offset="0.0784" stop-color="#f200ff"/><stop offset="0.0821" stop-color="#e500ff"/><stop offset="0.0858" stop-color="#d700ff"/><stop offset="0.0896" stop-color="#ca00ff"/><stop offset="0.0933" stop-color="#bc00ff"/><stop offset="0.0970" stop-color="#af00ff"/><stop offset="0.1007" stop-color="#a100ff"/><stop offset="0.1045" stop-color="#9400ff"/><stop offset="0.1082" stop-color="#8600ff"/><stop offset="0.1119" stop-color="#7800ff"/><stop offset="0.1157" stop-color="#6a00ff"/><stop offset="0.1194" stop-color="#5d00ff"/><stop offset="0.1231" stop-color="#4f00ff"/><stop offset="0.1269" stop-color="#4100ff"/><stop offset="0.1306" stop-color="#3400ff"/><stop offset="0.1343" stop-color="#2700ff"/><stop offset="0.1381" stop-color="#1a00ff"/><stop offset="0.1418" stop-color="#0e00ff"/><stop offset="0.1455" stop-color="#0100ff"/><stop offset="0.1493" stop-color="#000bff"/><stop offset="0.1530" stop-color="#0018ff"/><stop offset="0.1567" stop-color="#0025ff"/><stop offset="0.1604" stop-color="#0031ff"/><stop offset="0.1642" stop-color="#003eff"/><stop offset="0.1679" stop-color="#004aff"/><stop offset="0.1716" stop-color="#0057ff"/><stop offset="0.1754" stop-color="#0063ff"/><stop offset="0.1791" stop-color="#0070ff"/><stop offset="0.1828" stop-color="#007cff"/><stop offset="0.1866" stop-color="#0088ff"/><stop offset="0.1903" stop-color="#0095ff"/><stop offset="0.1940" stop-color="#00a1ff"/><stop offset="0.1978" stop-color="#00aeff"/><stop offset="0.2015" stop-color="#00baff"/><stop offset="0.2052" stop-color="#00c6ff"/><stop offset="0.2090" stop-color="#00d2ff"/><stop offset="0.2127" stop-color="#00deff"/><stop offset="0.2164" stop-color="#00ebff"/><stop offset="0.2201" stop-color="#00f7ff"/><stop offset="0.2239" stop-color="#00fffb"/><stop offset="0.2276" stop-color="#00ffef"/><stop offset="0.2313" stop-color="#00ffe3"/><stop offset="0.2351" stop-color="#00ffd6"/><stop offset="0.2388" stop-color="#00ffc9"/><stop offset="0.2425" stop-color="#00ffbd"/><stop offset="0.2463" stop-color="#00ffb0"/><stop offset="0.2500" stop-color="#00ffa3"/><stop offset="0.2537" stop-color="#00ff97"/><stop offset="0.2575" stop-color="#00ff8a"/><stop offset="0.2612" stop-color="#00ff7e"/><stop offset="0.2649" stop-color="#00ff73"/><stop offset="0.2687" stop-color="#00ff68"/><stop offset="0.2724" stop-color="#00ff5e"/><stop offset="0.2761" stop-color="#00ff53"/><stop offset="0.2799" stop-color="#00ff48"/><stop offset="0.2836" stop-color="#00ff3e"/><stop offset="0.2873" stop-color="#00ff33"/><stop offset="0.2910" stop-color="#00ff29"/><stop offset="0.2948" stop-color="#00ff1f"/><stop offset="0.2985" stop-color="#00ff15"/><stop offset="0.3022" stop-color="#00ff0c"/><stop offset="0.3060" stop-color="#00ff02"/><stop offset="0.3097" stop-color="#08ff00"/><stop offset="0.3134" stop-color="#12ff00"/><stop offset="0.3172" stop-color="#1bff00"/><stop offset="0.3209" stop-color="#23ff00"/><stop offset="0.3246" stop-color="#2bff00"/><stop offset="0.3284" stop-color="#33ff00"/><stop offset="0.3321" stop-color="#3cff00"/><stop offset="0.3358" stop-color="#44ff00"/><stop offset="0.3396" stop-color="#4dff00"/><stop offset="0.3433" stop-color="#56ff00"/><stop offset="0.3470" stop-color="#5fff00"/><stop offset="0.3507" stop-color="#68ff00"/><stop offset="0.3545" stop-color="#6fff00"/><stop offset="0.3582" stop-color="#77ff00"/><stop offset="0.3619" stop-color="#7fff00"/><stop offset="0.3657" stop-color="#84ff00"/><stop offset="0.3694" stop-color="#87ff00"/><stop offset="0.3731" stop-color="#8bff00"/><stop offset="0.3769" stop-color="#8eff00"/><stop offset="0.3806" stop-color="#92ff00"/><stop offset="0.3843" stop-color="#95ff00"/><stop offset="0.3881" stop-color="#98ff00"/><stop offset="0.3918" stop-color="#9bff00"/><stop offset="0.3955" stop-color="#9cff00"/><stop offset="0.3993" stop-color="#9dff00"/><stop offset="0.4030" stop-color="#9eff00"/><stop offset="0.4067" stop-color="#9fff00"/><stop offset="0.4104" stop-color="#a0ff00"/><stop offset="0.4142" stop-color="#a1ff00"/><stop offset="0.4179" stop-color="#a1ff00"/><stop offset="0.4216" stop-color="#a2ff00"/><stop offset="0.4254" stop-color="#a2ff00"/><stop offset="0.4291" stop-color="#a2ff00"/><stop offset="0.4328" stop-color="#a3ff00"/><stop offset="0.4366" stop-color="#a3ff00"/><stop offset="0.4403" stop-color="#a4ff00"/><stop offset="0.4440" stop-color="#a4ff00"/><stop offset="0.4478" stop-color="#a5ff00"/><stop offset="0.4515" stop-color="#a5ff00"/><stop offset="0.4552" stop-color="#a7ff00"/><stop offset="0.4590" stop-color="#a9ff00"/><stop offset="0.4627" stop-color="#abff00"/><stop offset="0.4664" stop-color="#aeff00"/><stop offset="0.4701" stop-color="#b2ff00"/><stop offset="0.4739" stop-color="#b7ff00"/><stop offset="0.4776" stop-color="#bbff00"/><stop offset="0.4813" stop-color="#bfff00"/><stop offset="0.4851" stop-color="#c2ff00"/><stop offset="0.4888" stop-color="#c5ff00"/><stop offset="0.4925" stop-color="#c8ff00"/><stop offset="0.4963" stop-color="#c9ff00"/><stop offset="0.5000" stop-color="#c9ff00"/><stop offset="0.5037" stop-color="#caff00"/><stop offset="0.5075" stop-color="#c9ff00"/><stop offset="0.5112" stop-color="#c7ff00"/><stop offset="0.5149" stop-color="#c6ff00"/><stop offset="0.5187" stop-color="#bcff00"/><stop offset="0.5224" stop-color="#bbff00"/><stop offset="0.5261" stop-color="#b9ff00"/><stop offset="0.5299" stop-color="#b7ff00"/><stop offset="0.5336" stop-color="#b6ff00"/><stop offset="0.5373" stop-color="#b6ff00"/><stop offset="0.5410" stop-color="#b6ff00"/><stop offset="0.5448" stop-color="#b7ff00"/><stop offset="0.5485" stop-color="#b7ff00"/><stop offset="0.5522" stop-color="#b9ff00"/><stop offset="0.5560" stop-color="#bbff00"/><stop offset="0.5597" stop-color="#bdff00"/><stop offset="0.5634" stop-color="#bfff00"/><stop offset="0.5672" stop-color="#bdff00"/><stop offset="0.5709" stop-color="#b6ff00"/><stop offset="0.5746" stop-color="#afff00"/><stop offset="0.5784" stop-color="#a8ff00"/><stop offset="0.5821" stop-color="#9eff00"/><stop offset="0.5858" stop-color="#93ff00"/><stop offset="0.5896" stop-color="#88ff00"/><stop offset="0.5933" stop-color="#81ff00"/><stop offset="0.5970" stop-color="#7bff00"/><stop offset="0.6007" stop-color="#80ff00"/><stop offset="0.6045" stop-color="#89ff00"/><stop offset="0.6082" stop-color="#93ff00"/><stop offset="0.6119" stop-color="#9fff00"/><stop offset="0.6157" stop-color="#abff00"/><stop offset="0.6194" stop-color="#b5ff00"/><stop offset="0.6231" stop-color="#b0ff00"/><stop offset="0.6269" stop-color="#acff00"/><stop offset="0.6306" stop-color="#a5ff00"/><stop offset="0.6343" stop-color="#9dff00"/><stop offset="0.6381" stop-color="#96ff00"/><stop offset="0.6418" stop-color="#96ff00"/><stop offset="0.6455" stop-color="#9aff00"/><stop offset="0.6493" stop-color="#9eff00"/><stop offset="0.6530" stop-color="#a2ff00"/><stop offset="0.6567" stop-color="#a4ff00"/><stop offset="0.6604" stop-color="#a6ff00"/><stop offset="0.6642" stop-color="#a8ff00"/><stop offset="0.6679" stop-color="#acff00"/><stop offset="0.6716" stop-color="#b0ff00"/><stop offset="0.6754" stop-color="#b4ff00"/><stop offset="0.6791" stop-color="#b8ff00"/><stop offset="0.6828" stop-color="#c2ff00"/><stop offset="0.6866" stop-color="#d3ff00"/><stop offset="0.6903" stop-color="#e4ff00"/><stop offset="0.6940" stop-color="#f2ff00"/><stop offset="0.6978" stop-color="#fbff00"/><stop offset="0.7015" stop-color="#fffa00"/><stop offset="0.7052" stop-color="#fbff00"/><stop offset="0.7090" stop-color="#f2ff00"/><stop offset="0.7127" stop-color="#e1ff00"/><stop offset="0.7164" stop-color="#cbff00"/><stop offset="0.7201" stop-color="#b5ff00"/><stop offset="0.7239" stop-color="#a3ff00"/><stop offset="0.7276" stop-color="#94ff00"/><stop offset="0.7313" stop-color="#84ff00"/><stop offset="0.7351" stop-color="#7fff00"/><stop offset="0.7388" stop-color="#80ff00"/><stop offset="0.7425" stop-color="#80ff00"/><stop offset="0.7463" stop-color="#82ff00"/><stop offset="0.7500" stop-color="#94ff00"/><stop offset="0.7537" stop-color="#a7ff00"/><stop offset="0.7575" stop-color="#b5ff00"/><stop offset="0.7612" stop-color="#c1ff00"/><stop offset="0.7649" stop-color="#c9ff00"/><stop offset="0.7687" stop-color="#c5ff00"/><stop offset="0.7724" stop-color="#c0ff00"/><stop offset="0.7761" stop-color="#bbff00"/><stop offset="0.7799" stop-color="#b4ff00"/><stop offset="0.7836" stop-color="#acff00"/><stop offset="0.7873" stop-color="#aaff00"/><stop offset="0.7910" stop-color="#b3ff00"/><stop offset="0.7948" stop-color="#bcff00"/><stop offset="0.7985" stop-color="#c7ff00"/><stop offset="0.8022" stop-color="#d5ff00"/><stop offset="0.8060" stop-color="#e2ff00"/><stop offset="0.8097" stop-color="#f0ff00"/><stop offset="0.8134" stop-color="#fdff00"/><stop offset="0.8172" stop-color="#fff400"/><stop offset="0.8209" stop-color="#fff500"/><stop offset="0.8246" stop-color="#feff00"/><stop offset="0.8284" stop-color="#e5ff00"/><stop offset="0.8321" stop-color="#c0ff00"/><stop offset="0.8358" stop-color="#9eff00"/><stop offset="0.8396" stop-color="#85ff00"/><stop offset="0.8433" stop-color="#7cff00"/><stop offset="0.8470" stop-color="#8bff00"/><stop offset="0.8507" stop-color="#99ff00"/><stop offset="0.8545" stop-color="#a5ff00"/><stop offset="0.8582" stop-color="#98ff00"/><stop offset="0.8619" stop-color="#8cff00"/><stop offset="0.8657" stop-color="#83ff00"/><stop offset="0.8694" stop-color="#7aff00"/><stop offset="0.8731" stop-color="#78ff00"/><stop offset="0.8769" stop-color="#87ff00"/><stop offset="0.8806" stop-color="#97ff00"/><stop offset="0.8843" stop-color="#a9ff00"/><stop offset="0.8881" stop-color="#beff00"/><stop offset="0.8918" stop-color="#d3ff00"/><stop offset="0.8955" stop-color="#d9ff00"/><stop offset="0.8993" stop-color="#d5ff00"/><stop offset="0.9030" stop-color="#caff00"/><stop offset="0.9067" stop-color="#a8ff00"/><stop offset="0.9104" stop-color="#86ff00"/><stop offset="0.9142" stop-color="#44ff00"/><stop offset="0.9179" stop-color="#02ff00"/><stop offset="0.9216" stop-color="#00ff21"/><stop offset="0.9254" stop-color="#00ff04"/><stop offset="0.9291" stop-color="#52ff00"/><stop offset="0.9328" stop-color="#aeff00"/><stop offset="0.9366" stop-color="#e0ff00"/><stop offset="0.9403" stop-color="#fff300"/><stop offset="0.9440" stop-color="#ffe800"/><stop offset="0.9478" stop-color="#fff600"/><stop offset="0.9515" stop-color="#f2ff00"/><stop offset="0.9552" stop-color="#b7ff00"/><stop offset="0.9590" stop-color="#7cff00"/><stop offset="0.9627" stop-color="#29ff00"/><stop offset="0.9664" stop-color="#00ff32"/><stop offset="0.9701" stop-color="#00ff9a"/><stop offset="0.9739" stop-color="#00e4ff"/><stop offset="0.9776" stop-color="#007cff"/><stop offset="0.9813" stop-color="#0046ff"/><stop offset="0.9851" stop-color="#006fff"/><stop offset="0.9888" stop-color="#008dff"/><stop offset="0.9925" stop-color="#009dff"/><stop offset="0.9963" stop-color="#0094ff"/><stop offset="1.0000" stop-color="#0074ff"/></linearGradient><linearGradient id="barg" x1="0" y1="0" x2="0" y2="1"><stop offset="0.0000" stop-color="#ffffff"/><stop offset="0.1429" stop-color="#ff0000"/><stop offset="0.2857" stop-color="#ffff00"/><stop offset="0.4286" stop-color="#00ff00"/><stop offset="0.5714" stop-color="#00ffff"/><stop offset="0.7143" stop-color="#0000ff"/><stop offset="0.8571" stop-color="#ff00ff"/><stop offset="1.0000" stop-color="#000000"/></linearGradient><rect x="684.8" y="754.1" width="28.8" height="284.0" fill="url(#barg)"/>
<clipPath id="c13"><rect x="718.0" y="754.6" width="535.0" height="281.0"/></clipPath>
<g clip-path="url(#c13)" fill="none" stroke-linejoin="round" stroke-linecap="round"><rect x="718.0" y="754.6" width="535.0" height="281.0" fill="url(#dirg)" stroke="none"/></g>
<path d="M748.10 754.6V1035.6" stroke="#606060" stroke-opacity="0.27" stroke-width="1.2"/>
<path d="M770.45 754.6V1035.6" stroke="#606060" stroke-opacity="0.27" stroke-width="1.2"/>
<path d="M787.79 754.6V1035.6" stroke="#606060" stroke-opacity="0.27" stroke-width="1.2"/>
<path d="M801.96 754.6V1035.6" stroke="#606060" stroke-opacity="0.27" stroke-width="1.2"/>
<path d="M813.93 754.6V1035.6" stroke="#606060" stroke-opacity="0.27" stroke-width="1.2"/>
<path d="M824.31 754.6V1035.6" stroke="#606060" stroke-opacity="0.27" stroke-width="1.2"/>
<path d="M833.46 754.6V1035.6" stroke="#606060" stroke-opacity="0.27" stroke-width="1.2"/>
<path d="M895.50 754.6V1035.6" stroke="#606060" stroke-opacity="0.27" stroke-width="1.2"/>
<path d="M927.00 754.6V1035.6" stroke="#606060" stroke-opacity="0.27" stroke-width="1.2"/>
<path d="M949.35 754.6V1035.6" stroke="#606060" stroke-opacity="0.27" stroke-width="1.2"/>
<path d="M966.69 754.6V1035.6" stroke="#606060" stroke-opacity="0.27" stroke-width="1.2"/>
<path d="M980.86 754.6V1035.6" stroke="#606060" stroke-opacity="0.27" stroke-width="1.2"/>
<path d="M992.83 754.6V1035.6" stroke="#606060" stroke-opacity="0.27" stroke-width="1.2"/>
<path d="M1003.21 754.6V1035.6" stroke="#606060" stroke-opacity="0.27" stroke-width="1.2"/>
<path d="M1012.36 754.6V1035.6" stroke="#606060" stroke-opacity="0.27" stroke-width="1.2"/>
<path d="M1074.40 754.6V1035.6" stroke="#606060" stroke-opacity="0.27" stroke-width="1.2"/>
<path d="M1105.90 754.6V1035.6" stroke="#606060" stroke-opacity="0.27" stroke-width="1.2"/>
<path d="M1128.25 754.6V1035.6" stroke="#606060" stroke-opacity="0.27" stroke-width="1.2"/>
<path d="M1145.59 754.6V1035.6" stroke="#606060" stroke-opacity="0.27" stroke-width="1.2"/>
<path d="M1159.76 754.6V1035.6" stroke="#606060" stroke-opacity="0.27" stroke-width="1.2"/>
<path d="M1171.73 754.6V1035.6" stroke="#606060" stroke-opacity="0.27" stroke-width="1.2"/>
<path d="M1182.11 754.6V1035.6" stroke="#606060" stroke-opacity="0.27" stroke-width="1.2"/>
<path d="M1191.26 754.6V1035.6" stroke="#606060" stroke-opacity="0.27" stroke-width="1.2"/>
<path d="M841.65 754.6V1035.6" stroke="#606060" stroke-opacity="0.5" stroke-width="1.2"/>
<path d="M1020.55 754.6V1035.6" stroke="#606060" stroke-opacity="0.5" stroke-width="1.2"/>
<path d="M1199.45 754.6V1035.6" stroke="#606060" stroke-opacity="0.5" stroke-width="1.2"/>
<path d="M718.0 801.43H1253.0" stroke="#707070" stroke-opacity="0.6" stroke-width="1.3"/>
<path d="M718.0 848.27H1253.0" stroke="#707070" stroke-opacity="0.6" stroke-width="1.3"/>
<path d="M718.0 895.10H1253.0" stroke="#707070" stroke-opacity="0.6" stroke-width="1.3"/>
<path d="M718.0 941.93H1253.0" stroke="#707070" stroke-opacity="0.6" stroke-width="1.3"/>
<path d="M718.0 988.77H1253.0" stroke="#707070" stroke-opacity="0.6" stroke-width="1.3"/>
<rect x="718.0" y="754.6" width="535.0" height="281.0" fill="none" stroke="#7a7a7a" stroke-width="1.5"/>
<g font-family='"Liberation Sans", Arial, sans-serif' font-size="15" fill="#000"><text transform="translate(985.0 746.3) scale(0.915 1)" text-anchor="middle">Directivity (ver)</text><text transform="translate(719.6 750.2) scale(0.915 1)">dB</text><text transform="translate(1249.4 750.2) scale(0.915 1)" text-anchor="end">deg</text><text transform="translate(714.0 757.2) scale(0.915 1)" text-anchor="end"></text><text transform="translate(714.0 804.0) scale(0.915 1)" text-anchor="end"></text><text transform="translate(714.0 850.9) scale(0.915 1)" text-anchor="end"></text><text transform="translate(714.0 897.7) scale(0.915 1)" text-anchor="end"></text><text transform="translate(714.0 944.5) scale(0.915 1)" text-anchor="end"></text><text transform="translate(714.0 991.4) scale(0.915 1)" text-anchor="end"></text><text transform="translate(714.0 1038.2) scale(0.915 1)" text-anchor="end"></text><text transform="translate(1272.4 757.2) scale(0.915 1)" text-anchor="middle">90</text><text transform="translate(1272.4 804.0) scale(0.915 1)" text-anchor="middle">60</text><text transform="translate(1272.4 850.9) scale(0.915 1)" text-anchor="middle">30</text><text transform="translate(1272.4 897.7) scale(0.915 1)" text-anchor="middle">0</text><text transform="translate(1272.4 944.5) scale(0.915 1)" text-anchor="middle">-30</text><text transform="translate(1272.4 991.4) scale(0.915 1)" text-anchor="middle">-60</text><text transform="translate(1272.4 1038.2) scale(0.915 1)" text-anchor="middle">-90</text><text transform="translate(716.8 1051.0) scale(0.915 1)" text-anchor="middle">20Hz</text><text transform="translate(788.8 1051.0) scale(0.915 1)" text-anchor="middle">50</text><text transform="translate(842.6 1051.0) scale(0.915 1)" text-anchor="middle">100</text><text transform="translate(896.5 1051.0) scale(0.915 1)" text-anchor="middle">200</text><text transform="translate(967.7 1051.0) scale(0.915 1)" text-anchor="middle">500</text><text transform="translate(1021.5 1051.0) scale(0.915 1)" text-anchor="middle">1k</text><text transform="translate(1075.4 1051.0) scale(0.915 1)" text-anchor="middle">2k</text><text transform="translate(1146.6 1051.0) scale(0.915 1)" text-anchor="middle">5k</text><text transform="translate(1200.4 1051.0) scale(0.915 1)" text-anchor="middle">10k</text><text transform="translate(1254.0 1051.0) scale(0.915 1)" text-anchor="middle">20k</text></g>
<g font-family='"Liberation Sans", Arial, sans-serif' font-size="15"><text transform="translate(711.8 755.1) scale(0.915 1)" text-anchor="end" fill="#000">94</text><text transform="translate(711.8 795.4) scale(0.915 1)" text-anchor="end" fill="#000">90</text><text transform="translate(711.8 835.7) scale(0.915 1)" text-anchor="end" fill="#000">86</text><text transform="translate(711.8 876.0) scale(0.915 1)" text-anchor="end" fill="#000">82</text><text transform="translate(711.8 916.2) scale(0.915 1)" text-anchor="end" fill="#000">78</text><text transform="translate(711.8 956.5) scale(0.915 1)" text-anchor="end" fill="#000">74</text><text transform="translate(711.8 996.8) scale(0.915 1)" text-anchor="end" fill="#000">70</text><text transform="translate(711.8 1037.1) scale(0.915 1)" text-anchor="end" fill="#fff">66</text></g>
<rect x="1299.7" y="731.3" width="616.6" height="326.2" fill="#fff"/>

<path d="M1340.8 765.84H1876.8" stroke="#e2e2e2" stroke-width="1.3"/>
<path d="M1340.8 777.08H1876.8" stroke="#e2e2e2" stroke-width="1.3"/>
<path d="M1340.8 788.32H1876.8" stroke="#e2e2e2" stroke-width="1.3"/>
<path d="M1340.8 799.56H1876.8" stroke="#e2e2e2" stroke-width="1.3"/>
<path d="M1340.8 822.04H1876.8" stroke="#e2e2e2" stroke-width="1.3"/>
<path d="M1340.8 833.28H1876.8" stroke="#e2e2e2" stroke-width="1.3"/>
<path d="M1340.8 844.52H1876.8" stroke="#e2e2e2" stroke-width="1.3"/>
<path d="M1340.8 855.76H1876.8" stroke="#e2e2e2" stroke-width="1.3"/>
<path d="M1340.8 878.24H1876.8" stroke="#e2e2e2" stroke-width="1.3"/>
<path d="M1340.8 889.48H1876.8" stroke="#e2e2e2" stroke-width="1.3"/>
<path d="M1340.8 900.72H1876.8" stroke="#e2e2e2" stroke-width="1.3"/>
<path d="M1340.8 911.96H1876.8" stroke="#e2e2e2" stroke-width="1.3"/>
<path d="M1340.8 934.44H1876.8" stroke="#e2e2e2" stroke-width="1.3"/>
<path d="M1340.8 945.68H1876.8" stroke="#e2e2e2" stroke-width="1.3"/>
<path d="M1340.8 956.92H1876.8" stroke="#e2e2e2" stroke-width="1.3"/>
<path d="M1340.8 968.16H1876.8" stroke="#e2e2e2" stroke-width="1.3"/>
<path d="M1340.8 990.64H1876.8" stroke="#e2e2e2" stroke-width="1.3"/>
<path d="M1340.8 1001.88H1876.8" stroke="#e2e2e2" stroke-width="1.3"/>
<path d="M1340.8 1013.12H1876.8" stroke="#e2e2e2" stroke-width="1.3"/>
<path d="M1340.8 1024.36H1876.8" stroke="#e2e2e2" stroke-width="1.3"/>
<path d="M1370.90 754.6V1035.6" stroke="#e2e2e2" stroke-width="1.3"/>
<path d="M1393.25 754.6V1035.6" stroke="#e2e2e2" stroke-width="1.3"/>
<path d="M1410.59 754.6V1035.6" stroke="#e2e2e2" stroke-width="1.3"/>
<path d="M1424.76 754.6V1035.6" stroke="#e2e2e2" stroke-width="1.3"/>
<path d="M1436.73 754.6V1035.6" stroke="#e2e2e2" stroke-width="1.3"/>
<path d="M1447.11 754.6V1035.6" stroke="#e2e2e2" stroke-width="1.3"/>
<path d="M1456.26 754.6V1035.6" stroke="#e2e2e2" stroke-width="1.3"/>
<path d="M1518.30 754.6V1035.6" stroke="#e2e2e2" stroke-width="1.3"/>
<path d="M1549.80 754.6V1035.6" stroke="#e2e2e2" stroke-width="1.3"/>
<path d="M1572.15 754.6V1035.6" stroke="#e2e2e2" stroke-width="1.3"/>
<path d="M1589.49 754.6V1035.6" stroke="#e2e2e2" stroke-width="1.3"/>
<path d="M1603.66 754.6V1035.6" stroke="#e2e2e2" stroke-width="1.3"/>
<path d="M1615.63 754.6V1035.6" stroke="#e2e2e2" stroke-width="1.3"/>
<path d="M1626.01 754.6V1035.6" stroke="#e2e2e2" stroke-width="1.3"/>
<path d="M1635.16 754.6V1035.6" stroke="#e2e2e2" stroke-width="1.3"/>
<path d="M1697.20 754.6V1035.6" stroke="#e2e2e2" stroke-width="1.3"/>
<path d="M1728.70 754.6V1035.6" stroke="#e2e2e2" stroke-width="1.3"/>
<path d="M1751.05 754.6V1035.6" stroke="#e2e2e2" stroke-width="1.3"/>
<path d="M1768.39 754.6V1035.6" stroke="#e2e2e2" stroke-width="1.3"/>
<path d="M1782.56 754.6V1035.6" stroke="#e2e2e2" stroke-width="1.3"/>
<path d="M1794.53 754.6V1035.6" stroke="#e2e2e2" stroke-width="1.3"/>
<path d="M1804.91 754.6V1035.6" stroke="#e2e2e2" stroke-width="1.3"/>
<path d="M1814.06 754.6V1035.6" stroke="#e2e2e2" stroke-width="1.3"/>
<path d="M1340.8 810.80H1876.8" stroke="#8c8c8c" stroke-width="1.4"/>
<path d="M1340.8 867.00H1876.8" stroke="#8c8c8c" stroke-width="1.4"/>
<path d="M1340.8 923.20H1876.8" stroke="#8c8c8c" stroke-width="1.4"/>
<path d="M1340.8 979.40H1876.8" stroke="#8c8c8c" stroke-width="1.4"/>
<path d="M1464.45 754.6V1035.6" stroke="#8c8c8c" stroke-width="1.4"/>
<path d="M1643.35 754.6V1035.6" stroke="#8c8c8c" stroke-width="1.4"/>
<path d="M1822.25 754.6V1035.6" stroke="#8c8c8c" stroke-width="1.4"/>
<clipPath id="c23"><rect x="1340.8" y="754.6" width="536.0" height="281.0"/></clipPath>
<g clip-path="url(#c23)" fill="none" stroke-linejoin="round" stroke-linecap="round"><path d="M1340.9 895.6 C1341.7 897.3 1343.9 903.2 1345.8 905.5 C1347.7 907.8 1349.9 909.4 1352.3 909.4 C1354.8 909.4 1357.3 908.0 1360.5 905.5 C1363.8 902.9 1367.9 897.5 1372.0 894.0 C1376.1 890.4 1381.3 886.2 1385.2 884.1 C1389.0 882.1 1392.0 881.5 1395.0 881.5 C1398.0 881.5 1400.7 881.8 1403.2 884.1 C1405.7 886.5 1407.6 891.0 1409.8 895.6 C1412.0 900.3 1413.9 906.6 1416.3 912.0 C1418.8 917.5 1421.8 924.3 1424.5 928.4 C1427.3 932.5 1430.0 934.9 1432.7 936.6 C1435.5 938.4 1437.9 938.9 1440.9 938.9 C1443.9 938.9 1447.0 938.0 1450.8 936.6 C1454.6 935.3 1459.0 933.2 1463.9 930.7 C1468.8 928.3 1474.8 924.9 1480.3 921.9 C1485.8 918.9 1491.8 915.3 1496.7 912.7 C1501.6 910.1 1505.7 908.4 1509.8 906.5 C1513.9 904.5 1517.8 902.2 1521.3 901.2 C1524.9 900.2 1529.0 900.4 1531.2 900.5 C1533.4 900.7 1532.5 902.3 1534.5 901.9 C1536.4 901.4 1538.6 899.2 1542.7 897.9 C1546.8 896.6 1554.1 894.9 1559.1 894.0 C1564.0 893.1 1567.8 892.8 1572.2 892.7 C1576.6 892.5 1581.2 892.8 1585.3 893.0 C1589.4 893.2 1593.5 894.0 1596.8 894.0 C1600.1 893.9 1601.4 892.9 1605.0 892.7 C1608.6 892.5 1614.3 892.7 1618.1 892.7 C1622.0 892.6 1624.1 893.2 1628.0 892.3 C1631.8 891.5 1637.3 888.8 1641.1 887.8 C1644.9 886.7 1646.6 886.7 1650.9 886.1 C1655.3 885.6 1661.9 885.3 1667.3 884.5 C1672.8 883.6 1679.4 882.3 1683.8 880.9 C1688.1 879.4 1690.3 878.4 1693.6 875.9 C1696.9 873.5 1700.2 869.8 1703.4 866.1 C1706.7 862.4 1710.0 857.5 1713.3 854.0 C1716.6 850.4 1719.8 847.0 1723.1 844.8 C1726.4 842.6 1729.7 841.3 1733.0 840.8 C1736.3 840.4 1739.5 840.9 1742.8 842.1 C1746.1 843.3 1749.4 844.9 1752.7 848.0 C1755.9 851.2 1759.2 855.7 1762.5 861.2 C1765.8 866.6 1769.1 874.8 1772.3 880.9 C1775.6 886.9 1778.9 893.3 1782.2 897.3 C1785.5 901.3 1789.3 903.4 1792.0 904.8 C1794.8 906.2 1795.9 906.5 1798.6 905.8 C1801.3 905.1 1804.6 903.6 1808.4 900.5 C1812.3 897.5 1817.2 892.0 1821.6 887.4 C1825.9 882.9 1830.3 877.4 1834.7 873.3 C1839.1 869.2 1843.7 865.5 1847.8 862.8 C1851.9 860.1 1856.8 857.8 1859.3 856.9 C1861.8 856.0 1861.2 857.8 1862.6 857.6 C1863.9 857.3 1865.1 856.0 1867.5 855.3 C1869.9 854.5 1875.4 853.4 1877.0 853.0" stroke="#909090" stroke-width="1.4"/><path d="M1340.9 944.8 C1342.0 948.1 1345.0 958.2 1347.4 964.5 C1349.9 970.8 1352.9 977.9 1355.6 982.6 C1358.4 987.2 1360.8 990.2 1363.8 992.4 C1366.8 994.6 1370.4 995.7 1373.7 995.7 C1377.0 995.7 1380.2 994.6 1383.5 992.4 C1386.8 990.2 1390.4 987.0 1393.4 982.6 C1396.4 978.2 1399.1 971.9 1401.6 966.2 C1404.0 960.4 1406.2 953.0 1408.1 948.1 C1410.0 943.2 1411.5 939.3 1413.0 936.6 C1414.6 934.0 1415.9 932.4 1417.3 932.4 C1418.7 932.4 1419.8 933.5 1421.3 936.6 C1422.7 939.8 1424.3 945.7 1426.2 951.4 C1428.1 957.1 1430.3 964.8 1432.7 971.1 C1435.2 977.4 1437.9 984.2 1440.9 989.1 C1443.9 994.1 1447.0 997.3 1450.8 1000.6 C1454.6 1003.9 1459.5 1006.8 1463.9 1008.8 C1468.3 1010.9 1472.1 1011.8 1477.0 1012.8 C1482.0 1013.7 1487.4 1014.1 1493.4 1014.4 C1499.5 1014.7 1506.8 1014.7 1513.1 1014.4 C1519.4 1014.1 1527.3 1012.8 1531.2 1012.8 C1535.0 1012.7 1532.5 1014.0 1536.1 1014.1 C1539.6 1014.1 1546.5 1013.5 1552.5 1013.1 C1558.5 1012.7 1565.9 1011.9 1572.2 1011.5 C1578.5 1011.0 1585.3 1010.5 1590.2 1010.5 C1595.2 1010.5 1597.1 1011.3 1601.7 1011.5 C1606.4 1011.6 1612.7 1011.1 1618.1 1011.5 C1623.6 1011.8 1629.1 1013.3 1634.5 1013.4 C1640.0 1013.6 1645.5 1012.5 1650.9 1012.4 C1656.4 1012.3 1661.9 1012.5 1667.3 1012.8 C1672.8 1013.0 1678.8 1013.6 1683.8 1014.1 C1688.7 1014.5 1693.0 1015.2 1696.9 1015.4 C1700.7 1015.6 1703.4 1015.9 1706.7 1015.4 C1710.0 1014.8 1713.3 1013.9 1716.6 1012.1 C1719.8 1010.3 1723.1 1007.7 1726.4 1004.6 C1729.7 1001.4 1733.0 998.2 1736.3 993.4 C1739.5 988.7 1742.8 983.0 1746.1 976.0 C1749.4 969.0 1752.9 959.1 1755.9 951.4 C1758.9 943.8 1762.0 934.7 1764.1 930.1 C1766.3 925.4 1767.7 924.7 1769.1 923.5 C1770.4 922.3 1771.0 922.0 1772.3 922.9 C1773.7 923.7 1775.4 924.2 1777.3 928.4 C1779.2 932.6 1781.4 941.3 1783.8 948.1 C1786.3 955.0 1789.0 962.9 1792.0 969.5 C1795.0 976.0 1798.6 982.9 1801.9 987.5 C1805.2 992.2 1808.4 995.0 1811.7 997.3 C1815.0 999.6 1818.3 1000.6 1821.6 1001.3 C1824.8 1001.9 1827.6 1002.0 1831.4 1001.3 C1835.2 1000.5 1840.7 998.4 1844.5 996.7 C1848.4 994.9 1851.6 992.7 1854.4 990.8 C1857.1 988.9 1859.3 986.2 1860.9 985.2 C1862.6 984.2 1862.6 985.7 1864.2 984.9 C1865.9 984.1 1868.7 981.8 1870.8 980.3 C1872.9 978.8 1876.0 976.7 1877.0 976.0" stroke="#555555" stroke-width="2.7"/></g>
<rect x="1340.8" y="754.6" width="536.0" height="281.0" fill="none" stroke="#7a7a7a" stroke-width="1.5"/>
<g font-family='"Liberation Sans", Arial, sans-serif' font-size="15" fill="#000"><text transform="translate(1608.3 746.3) scale(0.915 1)" text-anchor="middle">Impedance</text><text transform="translate(1342.4 750.2) scale(0.915 1)">ohm</text><text transform="translate(1873.2 750.2) scale(0.915 1)" text-anchor="end">deg</text><text transform="translate(1336.8 757.2) scale(0.915 1)" text-anchor="end">50</text><text transform="translate(1336.8 813.4) scale(0.915 1)" text-anchor="end">40</text><text transform="translate(1336.8 869.6) scale(0.915 1)" text-anchor="end">30</text><text transform="translate(1336.8 925.8) scale(0.915 1)" text-anchor="end">20</text><text transform="translate(1336.8 982.0) scale(0.915 1)" text-anchor="end">10</text><text transform="translate(1335.5 1038.2) scale(0.915 1)" text-anchor="end">0</text><text transform="translate(1896.2 757.2) scale(0.915 1)" text-anchor="middle">180</text><text transform="translate(1896.2 813.4) scale(0.915 1)" text-anchor="middle">108</text><text transform="translate(1896.2 869.6) scale(0.915 1)" text-anchor="middle">36</text><text transform="translate(1896.2 925.8) scale(0.915 1)" text-anchor="middle">-36</text><text transform="translate(1896.2 982.0) scale(0.915 1)" text-anchor="middle">-108</text><text transform="translate(1896.2 1038.2) scale(0.915 1)" text-anchor="middle">-180</text><text transform="translate(1339.6 1051.0) scale(0.915 1)" text-anchor="middle">20Hz</text><text transform="translate(1411.6 1051.0) scale(0.915 1)" text-anchor="middle">50</text><text transform="translate(1465.4 1051.0) scale(0.915 1)" text-anchor="middle">100</text><text transform="translate(1519.3 1051.0) scale(0.915 1)" text-anchor="middle">200</text><text transform="translate(1590.5 1051.0) scale(0.915 1)" text-anchor="middle">500</text><text transform="translate(1644.3 1051.0) scale(0.915 1)" text-anchor="middle">1k</text><text transform="translate(1698.2 1051.0) scale(0.915 1)" text-anchor="middle">2k</text><text transform="translate(1769.4 1051.0) scale(0.915 1)" text-anchor="middle">5k</text><text transform="translate(1823.2 1051.0) scale(0.915 1)" text-anchor="middle">10k</text><text transform="translate(1877.8 1051.0) scale(0.915 1)" text-anchor="middle">20k</text></g></svg>
</body></html>
